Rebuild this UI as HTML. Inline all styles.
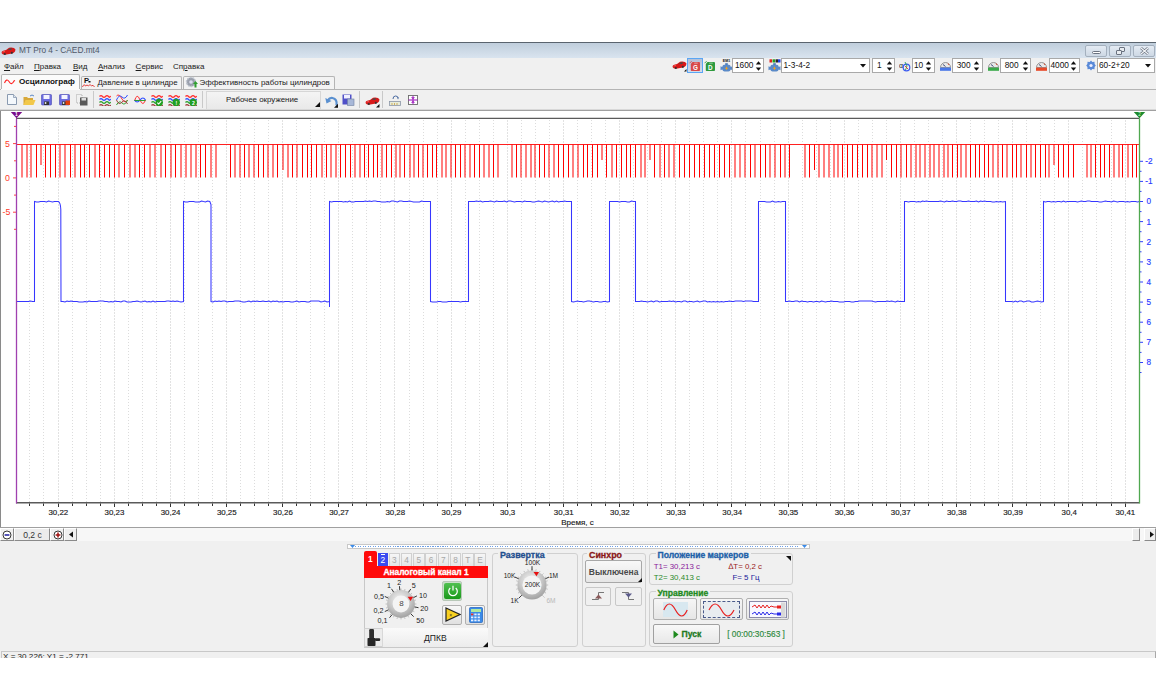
<!DOCTYPE html>
<html><head><meta charset="utf-8">
<style>
*{box-sizing:border-box;margin:0;padding:0}
html,body{width:1156px;height:700px;overflow:hidden;background:#fff;font-family:"Liberation Sans",sans-serif;font-size:8px;color:#1a1a1a}
.a{position:absolute}
.t{position:absolute;white-space:nowrap;line-height:1}
#win{position:absolute;left:0;top:42px;width:1156px;height:616px;background:#f0f0f0;overflow:hidden}
#title{position:absolute;left:0;top:0;width:1156px;height:16px;background:linear-gradient(#c0cedc,#d9e4ef);border-top:1px solid #5a646e}
.wb{position:absolute;top:1.5px;height:12px;width:22px;border:1px solid #a4b0be;border-radius:2px;background:linear-gradient(#e4ebf3,#cdd8e4)}
.menu{position:absolute;top:20.6px;font-size:8px;color:#1a1a1a}
.menu u{text-decoration:underline}
.tab{position:absolute;top:34px;height:14px;border:1px solid #b4b4b4;border-bottom:none;background:#f3f3f3;border-radius:2px 2px 0 0}
.tabA{top:32px;height:16px;background:#fbfbfb}
.tb{position:absolute}
.sep{position:absolute;top:49px;width:1px;height:17px;background:#c8c8c8;border-right:1px solid #fff}
.spin{position:absolute;top:16px;height:15px;background:#fff;border:1px solid #b8b8b8;font-size:7.8px}
.gb{position:absolute;border:1px solid #cfcfcf;border-radius:3px}
.gbt{position:absolute;font-weight:bold;background:#f0f0f0;padding:0 2px;line-height:1}
.btn{position:absolute;border:1px solid #adadad;border-radius:2px;background:linear-gradient(#f6f6f6,#e4e4e4)}
</style></head><body>
<div id="win">
  <div id="title">
    <svg class="a" style="left:1px;top:3px" width="15" height="10" viewBox="0 0 15 10"><path d="M0.5,7 L1,5.2 Q3,4.2 5,4 L8,1.8 Q10.5,1.2 13,2 L14.5,3.5 L14,5.5 Q13,7 11,7.5 L4,8.8 Q1.5,9 0.5,7Z" fill="#d81818"/><path d="M6.5,3.8 L9,2.2 L11.5,2.5 L10,4Z" fill="#4a4a4a"/><path d="M1.5,6 L4,5.5" stroke="#ff8080" stroke-width="0.6"/><circle cx="3.8" cy="8" r="1.1" fill="#333"/><circle cx="10.8" cy="6.8" r="1.1" fill="#333"/></svg>
    <div class="t" style="left:19px;top:3px;font-size:8.3px;color:#4f5868">MT Pro 4 - CAED.mt4</div>
    <div class="wb" style="left:1085px"><div class="a" style="left:6px;top:5.5px;width:9px;height:3px;border:1px solid #6a7280;border-radius:1.5px;background:#fff"></div></div>
    <div class="wb" style="left:1109px"><div class="a" style="left:9px;top:1.5px;width:6px;height:5px;border:1px solid #6a7280;border-radius:1px;background:#e8ecf0"></div><div class="a" style="left:6px;top:4.5px;width:6px;height:5px;border:1px solid #6a7280;border-radius:1px;background:#e8ecf0"></div></div>
    <div class="wb" style="left:1133px"><svg class="a" style="left:6px;top:1.5px" width="9" height="8" viewBox="0 0 9 8"><path d="M1,1 L8,7 M8,1 L1,7" stroke="#6a7280" stroke-width="2.6"/><path d="M1,1 L8,7 M8,1 L1,7" stroke="#f4f6f8" stroke-width="1.2"/></svg></div>
  </div>
  <!-- menu row -->
  <div class="menu t" style="left:4px"><u>Ф</u>айл</div>
  <div class="menu t" style="left:34px"><u>П</u>равка</div>
  <div class="menu t" style="left:73px"><u>В</u>ид</div>
  <div class="menu t" style="left:98px"><u>А</u>нализ</div>
  <div class="menu t" style="left:135.6px"><u>С</u>ервис</div>
  <div class="menu t" style="left:173px">Сп<u>р</u>авка</div>
  <svg class="a" style="left:672px;top:18px" width="15" height="12" viewBox="0 0 15 12"><path d="M0.5,7 L1,5.2 Q3,4.2 5,4 L8,1.8 Q10.5,1.2 13,2 L14.5,3.5 L14,5.5 Q13,7 11,7.5 L4,8.8 Q1.5,9 0.5,7Z" fill="#d81818"/><path d="M6.5,3.8 L9,2.2 L11.5,2.5 L10,4Z" fill="#4a4a4a"/><path d="M1.5,6 L4,5.5" stroke="#ff8080" stroke-width="0.6"/><circle cx="3.8" cy="8" r="1.1" fill="#333"/><circle cx="10.8" cy="6.8" r="1.1" fill="#333"/><path d="M12,11.5 L14.5,9 L14.5,11.5Z" fill="#111"/></svg>
<div class="a" style="left:687.4px;top:16px;width:15.6px;height:14.7px;background:linear-gradient(#b4c0d8,#d4dcea);border:1px solid #5aa6f4"></div>
<svg class="a" style="left:689.3px;top:18px" width="12" height="12" viewBox="0 0 12 12"><path d="M3.5,2 L10,2 Q11,2 11,3 L11,10.2 Q11,11 10,11 L2.6,11 Q1.8,11 1.8,10.2 L1.8,4 Z" fill="#d84848"/><path d="M0.6,3.2 L2.6,1.2" stroke="#d84848" stroke-width="0.9"/><rect x="5.2" y="2.6" width="3.5" height="1.1" fill="#fff" opacity="0.45"/><text x="6.4" y="9.8" font-family="Liberation Sans" font-size="6.3" font-weight="bold" fill="#fff" text-anchor="middle">G</text></svg>
<svg class="a" style="left:704.3px;top:18px" width="12" height="12" viewBox="0 0 12 12"><path d="M3.5,2 L10,2 Q11,2 11,3 L11,10.2 Q11,11 10,11 L2.6,11 Q1.8,11 1.8,10.2 L1.8,4 Z" fill="#2e9a3e"/><path d="M0.6,3.2 L2.6,1.2" stroke="#2e9a3e" stroke-width="0.9"/><rect x="5.2" y="2.6" width="3.5" height="1.1" fill="#fff" opacity="0.45"/><text x="6.4" y="9.8" font-family="Liberation Sans" font-size="6.3" font-weight="bold" fill="#fff" text-anchor="middle">D</text></svg>
<svg class="a" style="left:720px;top:17px" width="13" height="13" viewBox="0 0 13 13"><text x="6.5" y="3.3" font-family="Liberation Sans" font-size="3.6" font-weight="bold" fill="#111" text-anchor="middle">EM1</text><rect x="5.2" y="4.2" width="2.6" height="2" fill="#4a7ab8"/><path d="M2.5,7 Q3,5.8 4.5,5.8 L8.5,5.8 Q10,5.8 10.5,7 L10.8,8 L12.5,7.2 L12.5,11.3 L10.8,10.5 Q10,12.5 8.5,12.5 L4.5,12.5 Q3,12.5 2.2,10.5 L0.5,11.3 L0.5,7.2 L2.2,8Z" fill="#5a8ac8"/><path d="M6.5,7.3 L7.2,8.8 L8.4,9.3 L7.2,9.8 L6.5,11.3 L5.8,9.8 L4.6,9.3 L5.8,8.8Z" fill="#f0a020"/></svg>
<div class="a" style="left:732.3px;top:16.1px;width:31.7px;height:14.6px;background:#fff;border:1px solid #a9a9a9;"></div>
<div class="t" style="left:735.0px;top:19.2px;font-size:8.3px;color:#111">1600</div>
<svg class="a" style="left:754.5px;top:17.5px" width="7" height="12" viewBox="0 0 7 12"><path d="M0.8,4.4 L3.5,1.2 L6.2,4.4Z M0.8,7.6 L3.5,10.8 L6.2,7.6Z" fill="#111"/></svg>
<svg class="a" style="left:768px;top:17px" width="13" height="13" viewBox="0 0 13 13"><rect x="1.5" y="0.3" width="2.5" height="3.2" fill="#e02020"/><rect x="4.5" y="0.3" width="2.5" height="3.2" fill="#20a020"/><rect x="7.5" y="0.3" width="2.5" height="3.2" fill="#222"/><rect x="10" y="0.3" width="2.5" height="3.2" fill="#2040e0"/><rect x="5.2" y="4.2" width="2.6" height="2" fill="#4a7ab8"/><path d="M2.5,7 Q3,5.8 4.5,5.8 L8.5,5.8 Q10,5.8 10.5,7 L10.8,8 L12.5,7.2 L12.5,11.3 L10.8,10.5 Q10,12.5 8.5,12.5 L4.5,12.5 Q3,12.5 2.2,10.5 L0.5,11.3 L0.5,7.2 L2.2,8Z" fill="#5a8ac8"/><path d="M6.5,7.3 L7.2,8.8 L8.4,9.3 L7.2,9.8 L6.5,11.3 L5.8,9.8 L4.6,9.3 L5.8,8.8Z" fill="#f0a020"/></svg>
<div class="a" style="left:781.0px;top:16.1px;width:89.3px;height:14.6px;background:#fff;border:1px solid #a9a9a9;"></div>
<div class="t" style="left:783.4px;top:19.2px;font-size:8.3px;color:#111">1-3-4-2</div>
<svg class="a" style="left:860.0px;top:22px" width="6" height="4" viewBox="0 0 6 4"><path d="M0,0 L6,0 L3,3.5Z" fill="#111"/></svg>
<div class="a" style="left:871.9px;top:16.1px;width:22.8px;height:14.6px;background:#fff;border:1px solid #a9a9a9;"></div>
<div class="t" style="right:274.5px;top:19.2px;font-size:8.3px;color:#111">1</div>
<svg class="a" style="left:885.5px;top:17.5px" width="7" height="12" viewBox="0 0 7 12"><path d="M0.8,4.4 L3.5,1.2 L6.2,4.4Z M0.8,7.6 L3.5,10.8 L6.2,7.6Z" fill="#111"/></svg>
<svg class="a" style="left:898.5px;top:17.5px" width="12" height="12" viewBox="0 0 12 12"><text x="0" y="8" font-family="Liberation Sans" font-size="7" fill="#222">α</text><circle cx="7.5" cy="7.5" r="3.3" fill="none" stroke="#3a5af0" stroke-width="1.2"/><path d="M6,2 L8,6 L6.5,10" fill="none" stroke="#20a050" stroke-width="0.9"/><path d="M6,6 L9,9" stroke="#e03030" stroke-width="0.9"/></svg>
<div class="a" style="left:911.8px;top:16.1px;width:22.9px;height:14.6px;background:#fff;border:1px solid #a9a9a9;"></div>
<div class="t" style="left:914.0px;top:19.2px;font-size:8.3px;color:#111">10</div>
<svg class="a" style="left:925.0px;top:17.5px" width="7" height="12" viewBox="0 0 7 12"><path d="M0.8,4.4 L3.5,1.2 L6.2,4.4Z M0.8,7.6 L3.5,10.8 L6.2,7.6Z" fill="#111"/></svg>
<svg class="a" style="left:939.5px;top:18px" width="11" height="11" viewBox="0 0 11 11"><path d="M0.5,7.5 A5,5 0 0 1 10.5,7.5Z" fill="#e8e8e8" stroke="#8a8a8a" stroke-width="0.9"/><path d="M3,4.5 L5.5,6.5" stroke="#2a3a6a" stroke-width="0.9"/><path d="M8,3.5 L9,5" stroke="#e05030" stroke-width="1"/><rect x="0" y="7.6" width="11" height="3.2" fill="#4a78e8"/></svg>
<div class="a" style="left:951.5px;top:16.1px;width:31.2px;height:14.6px;background:#fff;border:1px solid #a9a9a9;"></div>
<div class="t" style="right:185.5px;top:19.2px;font-size:8.3px;color:#111">300</div>
<svg class="a" style="left:973.0px;top:17.5px" width="7" height="12" viewBox="0 0 7 12"><path d="M0.8,4.4 L3.5,1.2 L6.2,4.4Z M0.8,7.6 L3.5,10.8 L6.2,7.6Z" fill="#111"/></svg>
<svg class="a" style="left:987.7px;top:18px" width="11" height="11" viewBox="0 0 11 11"><path d="M0.5,7.5 A5,5 0 0 1 10.5,7.5Z" fill="#e8e8e8" stroke="#8a8a8a" stroke-width="0.9"/><path d="M3,4.5 L5.5,6.5" stroke="#2a3a6a" stroke-width="0.9"/><path d="M8,3.5 L9,5" stroke="#e05030" stroke-width="1"/><rect x="0" y="7.6" width="11" height="3.2" fill="#3aaa4a"/></svg>
<div class="a" style="left:1000.2px;top:16.1px;width:31.1px;height:14.6px;background:#fff;border:1px solid #a9a9a9;"></div>
<div class="t" style="right:137.5px;top:19.2px;font-size:8.3px;color:#111">800</div>
<svg class="a" style="left:1021.5px;top:17.5px" width="7" height="12" viewBox="0 0 7 12"><path d="M0.8,4.4 L3.5,1.2 L6.2,4.4Z M0.8,7.6 L3.5,10.8 L6.2,7.6Z" fill="#111"/></svg>
<svg class="a" style="left:1036.3px;top:18px" width="11" height="11" viewBox="0 0 11 11"><path d="M0.5,7.5 A5,5 0 0 1 10.5,7.5Z" fill="#e8e8e8" stroke="#8a8a8a" stroke-width="0.9"/><path d="M3,4.5 L5.5,6.5" stroke="#2a3a6a" stroke-width="0.9"/><path d="M8,3.5 L9,5" stroke="#e05030" stroke-width="1"/><rect x="0" y="7.6" width="11" height="3.2" fill="#e84a2a"/></svg>
<div class="a" style="left:1048.5px;top:16.1px;width:31.1px;height:14.6px;background:#fff;border:1px solid #a9a9a9;"></div>
<div class="t" style="left:1050.5px;top:19.2px;font-size:8.3px;color:#111">4000</div>
<svg class="a" style="left:1070.0px;top:17.5px" width="7" height="12" viewBox="0 0 7 12"><path d="M0.8,4.4 L3.5,1.2 L6.2,4.4Z M0.8,7.6 L3.5,10.8 L6.2,7.6Z" fill="#111"/></svg>
<svg class="a" style="left:1085.5px;top:18px" width="10" height="11" viewBox="0 0 10 11"><path d="M5,0.5 L6.3,2 L8.5,1.8 L8.6,4 L9.8,5.5 L8.6,7 L8.5,9.2 L6.3,9 L5,10.5 L3.7,9 L1.5,9.2 L1.4,7 L0.2,5.5 L1.4,4 L1.5,1.8 L3.7,2Z" fill="#5a8ad8"/><circle cx="5" cy="5.5" r="1.6" fill="#eef"/></svg>
<div class="a" style="left:1097.0px;top:16.1px;width:57.5px;height:14.6px;background:#fff;border:1px solid #a9a9a9;"></div>
<div class="t" style="left:1099.0px;top:19.2px;font-size:8.3px;color:#111">60-2+20</div>
<svg class="a" style="left:1144.5px;top:22px" width="6" height="4" viewBox="0 0 6 4"><path d="M0,0 L6,0 L3,3.5Z" fill="#111"/></svg>
  <!-- tabs -->
  <div class="tab tabA" style="left:1px;width:79px"></div>
  <div class="tab" style="left:80.5px;width:101px"></div>
  <div class="tab" style="left:183px;width:152px"></div>
  <div class="a" style="left:0;top:47px;width:1156px;height:1px;background:#b4b4b4"></div>
  <div class="a" style="left:1px;top:47px;width:79px;height:1px;background:#fbfbfb"></div>
  <svg class="a" style="left:4px;top:36px" width="12" height="8" viewBox="0 0 12 8"><path d="M0.5,5 Q2.5,0 5,3.5 Q7.5,8 10,3 L11,2.5" fill="none" stroke="#ff2020" stroke-width="1.1"/></svg>
  <div class="t" style="left:19px;top:36px;font-weight:bold;font-size:8.1px;color:#111">Осциллограф</div>
  <div class="t" style="left:97.5px;top:37px;font-size:7.9px">Давление в цилиндре</div>
  <div class="t" style="left:199.5px;top:37px;font-size:7.9px">Эффективность работы цилиндров</div>
  <svg class="a" style="left:82px;top:34px" width="13" height="12" viewBox="0 0 13 12"><text x="2" y="7" font-family="Liberation Sans" font-size="7.5" font-weight="bold" fill="#111">P</text><rect x="6.5" y="5" width="2" height="1.5" fill="#111"/><path d="M0.5,11 Q2,7 3.5,10 Q5,8 6.5,10 Q8,7 9.5,10 Q11,8 12.5,11" fill="none" stroke="#e03030" stroke-width="0.9"/></svg>
<svg class="a" style="left:185px;top:34px" width="13" height="12" viewBox="0 0 13 12"><circle cx="6" cy="6" r="4.5" fill="#9aa0ac"/><circle cx="6" cy="6" r="4.5" fill="none" stroke="#c0c6d0" stroke-width="1.5" stroke-dasharray="1.5 1.3"/><circle cx="6" cy="6" r="1.8" fill="#dde"/><path d="M9.5,11.5 L9.5,8 L8,8 L10.5,5 L13,8 L11.5,8 L11.5,11.5Z" fill="#30a030"/></svg>
<svg class="a" style="left:6.5px;top:52px" width="11" height="12" viewBox="0 0 11 12"><path d="M0.5,0.5 L6.5,0.5 L9.5,3.5 L9.5,10.5 L0.5,10.5Z" fill="#f4f8fc" stroke="#8a9ab0" stroke-width="1"/><path d="M6.5,0.5 L6.5,3.5 L9.5,3.5" fill="#dde6f0" stroke="#8a9ab0" stroke-width="0.8"/></svg>
<svg class="a" style="left:22.5px;top:51.5px" width="13" height="12" viewBox="0 0 13 12"><path d="M0.5,3 L4,3 L5,4 L10,4 L10,11 L0.5,11Z" fill="#d8a838"/><path d="M2.5,6 L12.5,6 L10.5,11 L0.5,11Z" fill="#f2c84a"/><path d="M7,2 Q9,0 11,2" fill="none" stroke="#4a7ac0" stroke-width="0.9"/></svg>
<svg class="a" style="left:41px;top:52px" width="11" height="12" viewBox="0 0 11 12"><rect x="0.5" y="0.5" width="10" height="10.5" rx="0.8" fill="#6a6ae0"/><rect x="0.5" y="0.5" width="10" height="10.5" rx="0.8" fill="none" stroke="#4848b0" stroke-width="0.6"/><rect x="2.5" y="1" width="6" height="4" fill="#f4f4ff"/><rect x="3" y="7.5" width="5" height="3.5" fill="#333"/><rect x="3.8" y="8" width="1.5" height="2" fill="#ddd"/></svg>
<svg class="a" style="left:58.5px;top:52px" width="11" height="12" viewBox="0 0 11 12"><rect x="0.5" y="0.5" width="10" height="10.5" rx="0.8" fill="#6a6ae0"/><rect x="0.5" y="0.5" width="10" height="10.5" rx="0.8" fill="none" stroke="#4848b0" stroke-width="0.6"/><rect x="2.5" y="1" width="6" height="4" fill="#f4f4ff"/><rect x="3" y="7.5" width="5" height="3.5" fill="#333"/><rect x="3.8" y="8" width="1.5" height="2" fill="#ddd"/><rect x="6.5" y="6.5" width="4.5" height="4.5" fill="#e04010"/></svg>
<svg class="a" style="left:75.5px;top:51.5px" width="12" height="12" viewBox="0 0 12 12"><path d="M0.5,0.5 L6,0.5 L6,9 L0.5,9Z" fill="none" stroke="#9a9a9a" stroke-width="0.8" stroke-dasharray="1 1"/><rect x="4" y="3.5" width="7.5" height="8" fill="#5a5a5a"/><rect x="5.5" y="4" width="4.5" height="2.5" fill="#ddd"/></svg>
<div class="a" style="left:92.5px;top:49px;width:1px;height:17px;background:#c9c9c9"></div>
<svg class="a" style="left:98.8px;top:51.7px" width="12" height="12" viewBox="0 0 12 12"><path d="M0.5,2.5 Q2,0.8 3.5,2.5 T6.5,2.5 T9.5,2.5 T11.5,2.0" fill="none" stroke="#ff3030" stroke-width="1.3"/><path d="M0.5,5.5 Q2,3.8 3.5,5.5 T6.5,5.5 T9.5,5.5 T11.5,5.0" fill="none" stroke="#3050ff" stroke-width="1.3"/><path d="M0.5,8.5 Q2,6.8 3.5,8.5 T6.5,8.5 T9.5,8.5 T11.5,8.0" fill="none" stroke="#30a030" stroke-width="1.3"/><path d="M0.5,11.5 Q2,9.8 3.5,11.5 T6.5,11.5 T9.5,11.5 T11.5,11.0" fill="none" stroke="#a04040" stroke-width="1.3"/></svg>
<svg class="a" style="left:115.5px;top:51.7px" width="12" height="12" viewBox="0 0 12 12"><path d="M0.5,2 Q3,-1 6,5 Q9,10 11.5,6" fill="none" stroke="#ff3030" stroke-width="1"/><path d="M0.5,6 Q3,0 6,3 Q9,6 11.5,1" fill="none" stroke="#3050ff" stroke-width="1"/><path d="M0.5,11 Q3,6 6,9 Q9,12 11.5,6" fill="none" stroke="#30a030" stroke-width="1"/><path d="M0.5,6 Q3,12 6,8 Q9,5 11.5,10" fill="none" stroke="#a04040" stroke-width="1"/></svg>
<svg class="a" style="left:133.5px;top:51.7px" width="12" height="12" viewBox="0 0 12 12"><path d="M0.5,7 Q3,-2 6,6 Q9,13 11.5,6" fill="none" stroke="#ff3030" stroke-width="1"/><path d="M0.5,6 Q3,10 6,6 Q9,2 11.5,6" fill="none" stroke="#3050ff" stroke-width="1.2"/><path d="M0.5,6.5 L11.5,6.5" stroke="#30a030" stroke-width="1"/></svg>
<svg class="a" style="left:150.7px;top:51.7px" width="12" height="12" viewBox="0 0 12 12"><path d="M0.5,2.5 Q2,0.8 3.5,2.5 T6.5,2.5 T9.5,2.5 T11.5,2.0" fill="none" stroke="#ff3030" stroke-width="1.3"/><path d="M0.5,5.5 Q2,3.8 3.5,5.5 T6.5,5.5 T9.5,5.5 T11.5,5.0" fill="none" stroke="#3050ff" stroke-width="1.3"/><path d="M0.5,8.5 Q2,6.8 3.5,8.5 T6.5,8.5 T9.5,8.5 T11.5,8.0" fill="none" stroke="#30a030" stroke-width="1.3"/><path d="M0.5,11.5 Q2,9.8 3.5,11.5 T6.5,11.5 T9.5,11.5 T11.5,11.0" fill="none" stroke="#a04040" stroke-width="1.3"/><circle cx="8.2" cy="8.5" r="3.7" fill="#22a022"/><path d="M6.3,8.6 L7.7,10 L10.2,7.2" fill="none" stroke="#fff" stroke-width="1.1"/></svg>
<svg class="a" style="left:167.8px;top:51.7px" width="12" height="12" viewBox="0 0 12 12"><path d="M0.5,2.5 Q2,0.8 3.5,2.5 T6.5,2.5 T9.5,2.5 T11.5,2.0" fill="none" stroke="#ff3030" stroke-width="1.3"/><path d="M0.5,5.5 Q2,3.8 3.5,5.5 T6.5,5.5 T9.5,5.5 T11.5,5.0" fill="none" stroke="#3050ff" stroke-width="1.3"/><path d="M0.5,8.5 Q2,6.8 3.5,8.5 T6.5,8.5 T9.5,8.5 T11.5,8.0" fill="none" stroke="#30a030" stroke-width="1.3"/><path d="M0.5,11.5 Q2,9.8 3.5,11.5 T6.5,11.5 T9.5,11.5 T11.5,11.0" fill="none" stroke="#a04040" stroke-width="1.3"/><circle cx="8.2" cy="8.5" r="3.7" fill="#22a022"/><text x="8.3" y="10.8" font-family="Liberation Sans" font-size="5" font-weight="bold" fill="#fff" text-anchor="middle">!</text></svg>
<svg class="a" style="left:185.4px;top:51.7px" width="12" height="12" viewBox="0 0 12 12"><path d="M0.5,2.5 Q2,0.8 3.5,2.5 T6.5,2.5 T9.5,2.5 T11.5,2.0" fill="none" stroke="#ff3030" stroke-width="1.3"/><path d="M0.5,5.5 Q2,3.8 3.5,5.5 T6.5,5.5 T9.5,5.5 T11.5,5.0" fill="none" stroke="#3050ff" stroke-width="1.3"/><path d="M0.5,8.5 Q2,6.8 3.5,8.5 T6.5,8.5 T9.5,8.5 T11.5,8.0" fill="none" stroke="#30a030" stroke-width="1.3"/><path d="M0.5,11.5 Q2,9.8 3.5,11.5 T6.5,11.5 T9.5,11.5 T11.5,11.0" fill="none" stroke="#a04040" stroke-width="1.3"/><circle cx="8.2" cy="8.5" r="3.7" fill="#22a022"/><text x="8.3" y="10.8" font-family="Liberation Sans" font-size="5" font-weight="bold" fill="#fff" text-anchor="middle">2</text></svg>
<div class="a" style="left:202px;top:49px;width:1px;height:17px;background:#c9c9c9"></div>
<div class="a" style="left:205.5px;top:48.5px;width:115px;height:18px;background:linear-gradient(#f4f4f4,#e9e9e9);border:1px solid #d6d6d6;border-bottom:none"></div>
<div class="t" style="left:226px;top:53.5px;font-size:7.9px;color:#222">Рабочее окружение</div>
<svg class="a" style="left:315px;top:60px" width="5" height="5" viewBox="0 0 5 5"><path d="M0,5 L5,0 L5,5Z" fill="#111"/></svg>
<svg class="a" style="left:324.5px;top:53px" width="14" height="13" viewBox="0 0 14 13"><path d="M11.5,10.5 Q12.5,4 7.5,3 Q4.5,2.6 3,5" fill="none" stroke="#5a90d0" stroke-width="2.2"/><path d="M0.3,3 L1.5,8.5 L6.5,6Z" fill="#5a90d0"/><path d="M9,12.8 L13,8.8 L13,12.8Z" fill="#111"/></svg>
<svg class="a" style="left:342.4px;top:51.900000000000006px" width="13" height="12" viewBox="0 0 13 12"><rect x="0.5" y="0.5" width="9" height="10" fill="#5050c8"/><rect x="2" y="1" width="6" height="3.5" fill="#f0f0ff"/><rect x="5.5" y="5" width="6.5" height="6.5" fill="#a8b8d8" stroke="#7080a0" stroke-width="0.6"/></svg>
<div class="a" style="left:359px;top:49px;width:1px;height:17px;background:#c9c9c9"></div>
<svg class="a" style="left:365px;top:53.5px" width="15" height="12" viewBox="0 0 15 12"><path d="M0.5,7 L1,5.2 Q3,4.2 5,4 L8,1.8 Q10.5,1.2 13,2 L14.5,3.5 L14,5.5 Q13,7 11,7.5 L4,8.8 Q1.5,9 0.5,7Z" fill="#d81818"/><path d="M6.5,3.8 L9,2.2 L11.5,2.5 L10,4Z" fill="#4a4a4a"/><path d="M1.5,6 L4,5.5" stroke="#ff8080" stroke-width="0.6"/><circle cx="3.8" cy="8" r="1.1" fill="#333"/><circle cx="10.8" cy="6.8" r="1.1" fill="#333"/><path d="M11,11.5 L14.5,8 L14.5,11.5Z" fill="#111"/></svg>
<div class="a" style="left:382px;top:49px;width:1px;height:17px;background:#c9c9c9"></div>
<svg class="a" style="left:389px;top:52.5px" width="12" height="11" viewBox="0 0 12 11"><path d="M4,4 Q4,1 6.5,1 Q9,1 9,3" fill="none" stroke="#4a6aa0" stroke-width="1"/><path d="M8,2.5 L10,2.5 L9,4.5Z" fill="#4a6aa0"/><rect x="0.5" y="6.5" width="11" height="4" fill="#e8ecd8" stroke="#8a96a8" stroke-width="0.8"/><path d="M3,8 V10 M5.5,8 V10 M8,8 V10" stroke="#c8a040" stroke-width="0.8"/></svg>
<svg class="a" style="left:407.5px;top:52.8px" width="10" height="10" viewBox="0 0 10 10"><rect x="0.5" y="0.5" width="9" height="9" fill="#fff" stroke="#6a6a6a" stroke-width="0.9"/><path d="M0.5,5 H9.5" stroke="#a020c0" stroke-width="1.1"/><path d="M5,0.8 V9.2" stroke="#a020c0" stroke-width="1"/><path d="M3,2.2 L5,4.2 L7,2.2Z M3,7.8 L5,5.8 L7,7.8Z" fill="#a020c0"/></svg>
<div class="a" style="left:0;top:66.5px;width:1156px;height:1px;background:#d8d8d8"></div>
</div>
<svg width="1156" height="418" viewBox="0 110 1156 418" style="position:absolute;left:0;top:110px">
<rect x="0" y="110" width="1156" height="418" fill="#fff"/>
<line x1="0.5" y1="110" x2="0.5" y2="528" stroke="#8a8a8a" stroke-width="1"/>
<line x1="0" y1="110.5" x2="1156" y2="110.5" stroke="#a0a0a0" stroke-width="1"/>
<line x1="0" y1="527.5" x2="1156" y2="527.5" stroke="#a0a0a0" stroke-width="1"/>
<line x1="29.50" y1="120" x2="29.50" y2="502" stroke="#dcdcdc" stroke-width="1" stroke-dasharray="1 2"/><line x1="43.50" y1="120" x2="43.50" y2="502" stroke="#dcdcdc" stroke-width="1" stroke-dasharray="1 2"/><line x1="58.50" y1="120" x2="58.50" y2="502" stroke="#e2e2e2" stroke-width="1" stroke-dasharray="2 1"/><line x1="72.50" y1="120" x2="72.50" y2="502" stroke="#dcdcdc" stroke-width="1" stroke-dasharray="1 2"/><line x1="86.50" y1="120" x2="86.50" y2="502" stroke="#dcdcdc" stroke-width="1" stroke-dasharray="1 2"/><line x1="100.50" y1="120" x2="100.50" y2="502" stroke="#dcdcdc" stroke-width="1" stroke-dasharray="1 2"/><line x1="114.50" y1="120" x2="114.50" y2="502" stroke="#e2e2e2" stroke-width="1" stroke-dasharray="2 1"/><line x1="128.50" y1="120" x2="128.50" y2="502" stroke="#dcdcdc" stroke-width="1" stroke-dasharray="1 2"/><line x1="142.50" y1="120" x2="142.50" y2="502" stroke="#dcdcdc" stroke-width="1" stroke-dasharray="1 2"/><line x1="156.50" y1="120" x2="156.50" y2="502" stroke="#dcdcdc" stroke-width="1" stroke-dasharray="1 2"/><line x1="170.50" y1="120" x2="170.50" y2="502" stroke="#e2e2e2" stroke-width="1" stroke-dasharray="2 1"/><line x1="184.50" y1="120" x2="184.50" y2="502" stroke="#dcdcdc" stroke-width="1" stroke-dasharray="1 2"/><line x1="198.50" y1="120" x2="198.50" y2="502" stroke="#dcdcdc" stroke-width="1" stroke-dasharray="1 2"/><line x1="212.50" y1="120" x2="212.50" y2="502" stroke="#dcdcdc" stroke-width="1" stroke-dasharray="1 2"/><line x1="226.50" y1="120" x2="226.50" y2="502" stroke="#e2e2e2" stroke-width="1" stroke-dasharray="2 1"/><line x1="240.50" y1="120" x2="240.50" y2="502" stroke="#dcdcdc" stroke-width="1" stroke-dasharray="1 2"/><line x1="254.50" y1="120" x2="254.50" y2="502" stroke="#dcdcdc" stroke-width="1" stroke-dasharray="1 2"/><line x1="268.50" y1="120" x2="268.50" y2="502" stroke="#dcdcdc" stroke-width="1" stroke-dasharray="1 2"/><line x1="282.50" y1="120" x2="282.50" y2="502" stroke="#e2e2e2" stroke-width="1" stroke-dasharray="2 1"/><line x1="296.50" y1="120" x2="296.50" y2="502" stroke="#dcdcdc" stroke-width="1" stroke-dasharray="1 2"/><line x1="310.50" y1="120" x2="310.50" y2="502" stroke="#dcdcdc" stroke-width="1" stroke-dasharray="1 2"/><line x1="324.50" y1="120" x2="324.50" y2="502" stroke="#dcdcdc" stroke-width="1" stroke-dasharray="1 2"/><line x1="338.50" y1="120" x2="338.50" y2="502" stroke="#e2e2e2" stroke-width="1" stroke-dasharray="2 1"/><line x1="352.50" y1="120" x2="352.50" y2="502" stroke="#dcdcdc" stroke-width="1" stroke-dasharray="1 2"/><line x1="366.50" y1="120" x2="366.50" y2="502" stroke="#dcdcdc" stroke-width="1" stroke-dasharray="1 2"/><line x1="380.50" y1="120" x2="380.50" y2="502" stroke="#dcdcdc" stroke-width="1" stroke-dasharray="1 2"/><line x1="394.50" y1="120" x2="394.50" y2="502" stroke="#e2e2e2" stroke-width="1" stroke-dasharray="2 1"/><line x1="409.50" y1="120" x2="409.50" y2="502" stroke="#dcdcdc" stroke-width="1" stroke-dasharray="1 2"/><line x1="423.50" y1="120" x2="423.50" y2="502" stroke="#dcdcdc" stroke-width="1" stroke-dasharray="1 2"/><line x1="437.50" y1="120" x2="437.50" y2="502" stroke="#dcdcdc" stroke-width="1" stroke-dasharray="1 2"/><line x1="451.50" y1="120" x2="451.50" y2="502" stroke="#e2e2e2" stroke-width="1" stroke-dasharray="2 1"/><line x1="465.50" y1="120" x2="465.50" y2="502" stroke="#dcdcdc" stroke-width="1" stroke-dasharray="1 2"/><line x1="479.50" y1="120" x2="479.50" y2="502" stroke="#dcdcdc" stroke-width="1" stroke-dasharray="1 2"/><line x1="493.50" y1="120" x2="493.50" y2="502" stroke="#dcdcdc" stroke-width="1" stroke-dasharray="1 2"/><line x1="507.50" y1="120" x2="507.50" y2="502" stroke="#e2e2e2" stroke-width="1" stroke-dasharray="2 1"/><line x1="521.50" y1="120" x2="521.50" y2="502" stroke="#dcdcdc" stroke-width="1" stroke-dasharray="1 2"/><line x1="535.50" y1="120" x2="535.50" y2="502" stroke="#dcdcdc" stroke-width="1" stroke-dasharray="1 2"/><line x1="549.50" y1="120" x2="549.50" y2="502" stroke="#dcdcdc" stroke-width="1" stroke-dasharray="1 2"/><line x1="563.50" y1="120" x2="563.50" y2="502" stroke="#e2e2e2" stroke-width="1" stroke-dasharray="2 1"/><line x1="577.50" y1="120" x2="577.50" y2="502" stroke="#dcdcdc" stroke-width="1" stroke-dasharray="1 2"/><line x1="591.50" y1="120" x2="591.50" y2="502" stroke="#dcdcdc" stroke-width="1" stroke-dasharray="1 2"/><line x1="605.50" y1="120" x2="605.50" y2="502" stroke="#dcdcdc" stroke-width="1" stroke-dasharray="1 2"/><line x1="619.50" y1="120" x2="619.50" y2="502" stroke="#e2e2e2" stroke-width="1" stroke-dasharray="2 1"/><line x1="633.50" y1="120" x2="633.50" y2="502" stroke="#dcdcdc" stroke-width="1" stroke-dasharray="1 2"/><line x1="647.50" y1="120" x2="647.50" y2="502" stroke="#dcdcdc" stroke-width="1" stroke-dasharray="1 2"/><line x1="661.50" y1="120" x2="661.50" y2="502" stroke="#dcdcdc" stroke-width="1" stroke-dasharray="1 2"/><line x1="675.50" y1="120" x2="675.50" y2="502" stroke="#e2e2e2" stroke-width="1" stroke-dasharray="2 1"/><line x1="689.50" y1="120" x2="689.50" y2="502" stroke="#dcdcdc" stroke-width="1" stroke-dasharray="1 2"/><line x1="703.50" y1="120" x2="703.50" y2="502" stroke="#dcdcdc" stroke-width="1" stroke-dasharray="1 2"/><line x1="717.50" y1="120" x2="717.50" y2="502" stroke="#dcdcdc" stroke-width="1" stroke-dasharray="1 2"/><line x1="731.50" y1="120" x2="731.50" y2="502" stroke="#e2e2e2" stroke-width="1" stroke-dasharray="2 1"/><line x1="745.50" y1="120" x2="745.50" y2="502" stroke="#dcdcdc" stroke-width="1" stroke-dasharray="1 2"/><line x1="760.50" y1="120" x2="760.50" y2="502" stroke="#dcdcdc" stroke-width="1" stroke-dasharray="1 2"/><line x1="774.50" y1="120" x2="774.50" y2="502" stroke="#dcdcdc" stroke-width="1" stroke-dasharray="1 2"/><line x1="788.50" y1="120" x2="788.50" y2="502" stroke="#e2e2e2" stroke-width="1" stroke-dasharray="2 1"/><line x1="802.50" y1="120" x2="802.50" y2="502" stroke="#dcdcdc" stroke-width="1" stroke-dasharray="1 2"/><line x1="816.50" y1="120" x2="816.50" y2="502" stroke="#dcdcdc" stroke-width="1" stroke-dasharray="1 2"/><line x1="830.50" y1="120" x2="830.50" y2="502" stroke="#dcdcdc" stroke-width="1" stroke-dasharray="1 2"/><line x1="844.50" y1="120" x2="844.50" y2="502" stroke="#e2e2e2" stroke-width="1" stroke-dasharray="2 1"/><line x1="858.50" y1="120" x2="858.50" y2="502" stroke="#dcdcdc" stroke-width="1" stroke-dasharray="1 2"/><line x1="872.50" y1="120" x2="872.50" y2="502" stroke="#dcdcdc" stroke-width="1" stroke-dasharray="1 2"/><line x1="886.50" y1="120" x2="886.50" y2="502" stroke="#dcdcdc" stroke-width="1" stroke-dasharray="1 2"/><line x1="900.50" y1="120" x2="900.50" y2="502" stroke="#e2e2e2" stroke-width="1" stroke-dasharray="2 1"/><line x1="914.50" y1="120" x2="914.50" y2="502" stroke="#dcdcdc" stroke-width="1" stroke-dasharray="1 2"/><line x1="928.50" y1="120" x2="928.50" y2="502" stroke="#dcdcdc" stroke-width="1" stroke-dasharray="1 2"/><line x1="942.50" y1="120" x2="942.50" y2="502" stroke="#dcdcdc" stroke-width="1" stroke-dasharray="1 2"/><line x1="956.50" y1="120" x2="956.50" y2="502" stroke="#e2e2e2" stroke-width="1" stroke-dasharray="2 1"/><line x1="970.50" y1="120" x2="970.50" y2="502" stroke="#dcdcdc" stroke-width="1" stroke-dasharray="1 2"/><line x1="984.50" y1="120" x2="984.50" y2="502" stroke="#dcdcdc" stroke-width="1" stroke-dasharray="1 2"/><line x1="998.50" y1="120" x2="998.50" y2="502" stroke="#dcdcdc" stroke-width="1" stroke-dasharray="1 2"/><line x1="1012.50" y1="120" x2="1012.50" y2="502" stroke="#e2e2e2" stroke-width="1" stroke-dasharray="2 1"/><line x1="1026.50" y1="120" x2="1026.50" y2="502" stroke="#dcdcdc" stroke-width="1" stroke-dasharray="1 2"/><line x1="1040.50" y1="120" x2="1040.50" y2="502" stroke="#dcdcdc" stroke-width="1" stroke-dasharray="1 2"/><line x1="1054.50" y1="120" x2="1054.50" y2="502" stroke="#dcdcdc" stroke-width="1" stroke-dasharray="1 2"/><line x1="1068.50" y1="120" x2="1068.50" y2="502" stroke="#e2e2e2" stroke-width="1" stroke-dasharray="2 1"/><line x1="1082.50" y1="120" x2="1082.50" y2="502" stroke="#dcdcdc" stroke-width="1" stroke-dasharray="1 2"/><line x1="1096.50" y1="120" x2="1096.50" y2="502" stroke="#dcdcdc" stroke-width="1" stroke-dasharray="1 2"/><line x1="1111.50" y1="120" x2="1111.50" y2="502" stroke="#dcdcdc" stroke-width="1" stroke-dasharray="1 2"/><line x1="1125.50" y1="120" x2="1125.50" y2="502" stroke="#e2e2e2" stroke-width="1" stroke-dasharray="2 1"/>
<line x1="16" y1="118.3" x2="1139.5" y2="118.3" stroke="#5a5a5a" stroke-width="1.2"/>
<line x1="16" y1="502.8" x2="1139.5" y2="502.8" stroke="#5a5a5a" stroke-width="1.4"/>
<line x1="29.50" y1="503.5" x2="29.50" y2="506.0" stroke="#333" stroke-width="1"/><line x1="43.50" y1="503.5" x2="43.50" y2="506.0" stroke="#333" stroke-width="1"/><line x1="58.50" y1="503.5" x2="58.50" y2="507.0" stroke="#333" stroke-width="1"/><line x1="72.50" y1="503.5" x2="72.50" y2="506.0" stroke="#333" stroke-width="1"/><line x1="86.50" y1="503.5" x2="86.50" y2="506.0" stroke="#333" stroke-width="1"/><line x1="100.50" y1="503.5" x2="100.50" y2="506.0" stroke="#333" stroke-width="1"/><line x1="114.50" y1="503.5" x2="114.50" y2="507.0" stroke="#333" stroke-width="1"/><line x1="128.50" y1="503.5" x2="128.50" y2="506.0" stroke="#333" stroke-width="1"/><line x1="142.50" y1="503.5" x2="142.50" y2="506.0" stroke="#333" stroke-width="1"/><line x1="156.50" y1="503.5" x2="156.50" y2="506.0" stroke="#333" stroke-width="1"/><line x1="170.50" y1="503.5" x2="170.50" y2="507.0" stroke="#333" stroke-width="1"/><line x1="184.50" y1="503.5" x2="184.50" y2="506.0" stroke="#333" stroke-width="1"/><line x1="198.50" y1="503.5" x2="198.50" y2="506.0" stroke="#333" stroke-width="1"/><line x1="212.50" y1="503.5" x2="212.50" y2="506.0" stroke="#333" stroke-width="1"/><line x1="226.50" y1="503.5" x2="226.50" y2="507.0" stroke="#333" stroke-width="1"/><line x1="240.50" y1="503.5" x2="240.50" y2="506.0" stroke="#333" stroke-width="1"/><line x1="254.50" y1="503.5" x2="254.50" y2="506.0" stroke="#333" stroke-width="1"/><line x1="268.50" y1="503.5" x2="268.50" y2="506.0" stroke="#333" stroke-width="1"/><line x1="282.50" y1="503.5" x2="282.50" y2="507.0" stroke="#333" stroke-width="1"/><line x1="296.50" y1="503.5" x2="296.50" y2="506.0" stroke="#333" stroke-width="1"/><line x1="310.50" y1="503.5" x2="310.50" y2="506.0" stroke="#333" stroke-width="1"/><line x1="324.50" y1="503.5" x2="324.50" y2="506.0" stroke="#333" stroke-width="1"/><line x1="338.50" y1="503.5" x2="338.50" y2="507.0" stroke="#333" stroke-width="1"/><line x1="352.50" y1="503.5" x2="352.50" y2="506.0" stroke="#333" stroke-width="1"/><line x1="366.50" y1="503.5" x2="366.50" y2="506.0" stroke="#333" stroke-width="1"/><line x1="380.50" y1="503.5" x2="380.50" y2="506.0" stroke="#333" stroke-width="1"/><line x1="394.50" y1="503.5" x2="394.50" y2="507.0" stroke="#333" stroke-width="1"/><line x1="409.50" y1="503.5" x2="409.50" y2="506.0" stroke="#333" stroke-width="1"/><line x1="423.50" y1="503.5" x2="423.50" y2="506.0" stroke="#333" stroke-width="1"/><line x1="437.50" y1="503.5" x2="437.50" y2="506.0" stroke="#333" stroke-width="1"/><line x1="451.50" y1="503.5" x2="451.50" y2="507.0" stroke="#333" stroke-width="1"/><line x1="465.50" y1="503.5" x2="465.50" y2="506.0" stroke="#333" stroke-width="1"/><line x1="479.50" y1="503.5" x2="479.50" y2="506.0" stroke="#333" stroke-width="1"/><line x1="493.50" y1="503.5" x2="493.50" y2="506.0" stroke="#333" stroke-width="1"/><line x1="507.50" y1="503.5" x2="507.50" y2="507.0" stroke="#333" stroke-width="1"/><line x1="521.50" y1="503.5" x2="521.50" y2="506.0" stroke="#333" stroke-width="1"/><line x1="535.50" y1="503.5" x2="535.50" y2="506.0" stroke="#333" stroke-width="1"/><line x1="549.50" y1="503.5" x2="549.50" y2="506.0" stroke="#333" stroke-width="1"/><line x1="563.50" y1="503.5" x2="563.50" y2="507.0" stroke="#333" stroke-width="1"/><line x1="577.50" y1="503.5" x2="577.50" y2="506.0" stroke="#333" stroke-width="1"/><line x1="591.50" y1="503.5" x2="591.50" y2="506.0" stroke="#333" stroke-width="1"/><line x1="605.50" y1="503.5" x2="605.50" y2="506.0" stroke="#333" stroke-width="1"/><line x1="619.50" y1="503.5" x2="619.50" y2="507.0" stroke="#333" stroke-width="1"/><line x1="633.50" y1="503.5" x2="633.50" y2="506.0" stroke="#333" stroke-width="1"/><line x1="647.50" y1="503.5" x2="647.50" y2="506.0" stroke="#333" stroke-width="1"/><line x1="661.50" y1="503.5" x2="661.50" y2="506.0" stroke="#333" stroke-width="1"/><line x1="675.50" y1="503.5" x2="675.50" y2="507.0" stroke="#333" stroke-width="1"/><line x1="689.50" y1="503.5" x2="689.50" y2="506.0" stroke="#333" stroke-width="1"/><line x1="703.50" y1="503.5" x2="703.50" y2="506.0" stroke="#333" stroke-width="1"/><line x1="717.50" y1="503.5" x2="717.50" y2="506.0" stroke="#333" stroke-width="1"/><line x1="731.50" y1="503.5" x2="731.50" y2="507.0" stroke="#333" stroke-width="1"/><line x1="745.50" y1="503.5" x2="745.50" y2="506.0" stroke="#333" stroke-width="1"/><line x1="760.50" y1="503.5" x2="760.50" y2="506.0" stroke="#333" stroke-width="1"/><line x1="774.50" y1="503.5" x2="774.50" y2="506.0" stroke="#333" stroke-width="1"/><line x1="788.50" y1="503.5" x2="788.50" y2="507.0" stroke="#333" stroke-width="1"/><line x1="802.50" y1="503.5" x2="802.50" y2="506.0" stroke="#333" stroke-width="1"/><line x1="816.50" y1="503.5" x2="816.50" y2="506.0" stroke="#333" stroke-width="1"/><line x1="830.50" y1="503.5" x2="830.50" y2="506.0" stroke="#333" stroke-width="1"/><line x1="844.50" y1="503.5" x2="844.50" y2="507.0" stroke="#333" stroke-width="1"/><line x1="858.50" y1="503.5" x2="858.50" y2="506.0" stroke="#333" stroke-width="1"/><line x1="872.50" y1="503.5" x2="872.50" y2="506.0" stroke="#333" stroke-width="1"/><line x1="886.50" y1="503.5" x2="886.50" y2="506.0" stroke="#333" stroke-width="1"/><line x1="900.50" y1="503.5" x2="900.50" y2="507.0" stroke="#333" stroke-width="1"/><line x1="914.50" y1="503.5" x2="914.50" y2="506.0" stroke="#333" stroke-width="1"/><line x1="928.50" y1="503.5" x2="928.50" y2="506.0" stroke="#333" stroke-width="1"/><line x1="942.50" y1="503.5" x2="942.50" y2="506.0" stroke="#333" stroke-width="1"/><line x1="956.50" y1="503.5" x2="956.50" y2="507.0" stroke="#333" stroke-width="1"/><line x1="970.50" y1="503.5" x2="970.50" y2="506.0" stroke="#333" stroke-width="1"/><line x1="984.50" y1="503.5" x2="984.50" y2="506.0" stroke="#333" stroke-width="1"/><line x1="998.50" y1="503.5" x2="998.50" y2="506.0" stroke="#333" stroke-width="1"/><line x1="1012.50" y1="503.5" x2="1012.50" y2="507.0" stroke="#333" stroke-width="1"/><line x1="1026.50" y1="503.5" x2="1026.50" y2="506.0" stroke="#333" stroke-width="1"/><line x1="1040.50" y1="503.5" x2="1040.50" y2="506.0" stroke="#333" stroke-width="1"/><line x1="1054.50" y1="503.5" x2="1054.50" y2="506.0" stroke="#333" stroke-width="1"/><line x1="1068.50" y1="503.5" x2="1068.50" y2="507.0" stroke="#333" stroke-width="1"/><line x1="1082.50" y1="503.5" x2="1082.50" y2="506.0" stroke="#333" stroke-width="1"/><line x1="1096.50" y1="503.5" x2="1096.50" y2="506.0" stroke="#333" stroke-width="1"/><line x1="1111.50" y1="503.5" x2="1111.50" y2="506.0" stroke="#333" stroke-width="1"/><line x1="1125.50" y1="503.5" x2="1125.50" y2="507.0" stroke="#333" stroke-width="1"/>
<g font-family="Liberation Sans" font-size="7.9" fill="#1a1a1a" stroke="#1a1a1a" stroke-width="0.15"><text x="58.30" y="515.3" text-anchor="middle">30,22</text><text x="114.46" y="515.3" text-anchor="middle">30,23</text><text x="170.62" y="515.3" text-anchor="middle">30,24</text><text x="226.78" y="515.3" text-anchor="middle">30,25</text><text x="282.94" y="515.3" text-anchor="middle">30,26</text><text x="339.10" y="515.3" text-anchor="middle">30,27</text><text x="395.26" y="515.3" text-anchor="middle">30,28</text><text x="451.42" y="515.3" text-anchor="middle">30,29</text><text x="507.58" y="515.3" text-anchor="middle">30,3</text><text x="563.74" y="515.3" text-anchor="middle">30,31</text><text x="619.90" y="515.3" text-anchor="middle">30,32</text><text x="676.06" y="515.3" text-anchor="middle">30,33</text><text x="732.22" y="515.3" text-anchor="middle">30,34</text><text x="788.38" y="515.3" text-anchor="middle">30,35</text><text x="844.54" y="515.3" text-anchor="middle">30,36</text><text x="900.70" y="515.3" text-anchor="middle">30,37</text><text x="956.86" y="515.3" text-anchor="middle">30,38</text><text x="1013.02" y="515.3" text-anchor="middle">30,39</text><text x="1069.18" y="515.3" text-anchor="middle">30,4</text><text x="1125.34" y="515.3" text-anchor="middle">30,41</text><text x="577.5" y="525" text-anchor="middle" font-size="8">Время, с</text></g>
<line x1="14" y1="126.4" x2="16" y2="126.4" stroke="#ff4040" stroke-width="1"/><line x1="13" y1="143.6" x2="16" y2="143.6" stroke="#ff4040" stroke-width="1"/><line x1="14" y1="160.8" x2="16" y2="160.8" stroke="#ff4040" stroke-width="1"/><line x1="13" y1="177.9" x2="16" y2="177.9" stroke="#ff4040" stroke-width="1"/><line x1="14" y1="195.1" x2="16" y2="195.1" stroke="#ff4040" stroke-width="1"/><line x1="13" y1="212.2" x2="16" y2="212.2" stroke="#ff4040" stroke-width="1"/><line x1="14" y1="229.3" x2="16" y2="229.3" stroke="#ff4040" stroke-width="1"/>
<g font-family="Liberation Sans" font-size="8.8" fill="#ff3a2a" text-anchor="end"><text x="10" y="146.8">5</text><text x="10" y="181.2">0</text><text x="10.3" y="215.3">-5</text></g>
<line x1="1139.5" y1="161.3" x2="1143.0" y2="161.3" stroke="#3040ff" stroke-width="1"/><line x1="1139.5" y1="171.3" x2="1141.5" y2="171.3" stroke="#3040ff" stroke-width="1"/><line x1="1139.5" y1="181.4" x2="1143.0" y2="181.4" stroke="#3040ff" stroke-width="1"/><line x1="1139.5" y1="191.4" x2="1141.5" y2="191.4" stroke="#3040ff" stroke-width="1"/><line x1="1139.5" y1="201.5" x2="1143.0" y2="201.5" stroke="#3040ff" stroke-width="1"/><line x1="1139.5" y1="211.6" x2="1141.5" y2="211.6" stroke="#3040ff" stroke-width="1"/><line x1="1139.5" y1="221.6" x2="1143.0" y2="221.6" stroke="#3040ff" stroke-width="1"/><line x1="1139.5" y1="231.7" x2="1141.5" y2="231.7" stroke="#3040ff" stroke-width="1"/><line x1="1139.5" y1="241.7" x2="1143.0" y2="241.7" stroke="#3040ff" stroke-width="1"/><line x1="1139.5" y1="251.8" x2="1141.5" y2="251.8" stroke="#3040ff" stroke-width="1"/><line x1="1139.5" y1="261.9" x2="1143.0" y2="261.9" stroke="#3040ff" stroke-width="1"/><line x1="1139.5" y1="271.9" x2="1141.5" y2="271.9" stroke="#3040ff" stroke-width="1"/><line x1="1139.5" y1="282.0" x2="1143.0" y2="282.0" stroke="#3040ff" stroke-width="1"/><line x1="1139.5" y1="292.0" x2="1141.5" y2="292.0" stroke="#3040ff" stroke-width="1"/><line x1="1139.5" y1="302.1" x2="1143.0" y2="302.1" stroke="#3040ff" stroke-width="1"/><line x1="1139.5" y1="312.2" x2="1141.5" y2="312.2" stroke="#3040ff" stroke-width="1"/><line x1="1139.5" y1="322.2" x2="1143.0" y2="322.2" stroke="#3040ff" stroke-width="1"/><line x1="1139.5" y1="332.3" x2="1141.5" y2="332.3" stroke="#3040ff" stroke-width="1"/><line x1="1139.5" y1="342.3" x2="1143.0" y2="342.3" stroke="#3040ff" stroke-width="1"/><line x1="1139.5" y1="352.4" x2="1141.5" y2="352.4" stroke="#3040ff" stroke-width="1"/><line x1="1139.5" y1="362.5" x2="1143.0" y2="362.5" stroke="#3040ff" stroke-width="1"/><line x1="1139.5" y1="372.5" x2="1141.5" y2="372.5" stroke="#3040ff" stroke-width="1"/>
<g font-family="Liberation Sans" font-size="8.2" fill="#2a3aff" stroke="#2a3aff" stroke-width="0.15"><text x="1149.0" y="164.2" text-anchor="middle">-2</text><text x="1149.0" y="184.3" text-anchor="middle">-1</text><text x="1148.9" y="204.4" text-anchor="middle">0</text><text x="1148.9" y="224.5" text-anchor="middle">1</text><text x="1148.9" y="244.6" text-anchor="middle">2</text><text x="1148.9" y="264.8" text-anchor="middle">3</text><text x="1148.9" y="284.9" text-anchor="middle">4</text><text x="1148.9" y="305.0" text-anchor="middle">5</text><text x="1148.9" y="325.1" text-anchor="middle">6</text><text x="1148.9" y="345.2" text-anchor="middle">7</text><text x="1148.9" y="365.4" text-anchor="middle">8</text></g>
<line x1="16.5" y1="144.5" x2="1139.5" y2="144.5" stroke="#ff2020" stroke-width="1"/><rect x="21" y="144.5" width="2" height="33.0" fill="#ff0000" opacity="0.5"/><rect x="26" y="144.5" width="2" height="33.0" fill="#ff0000" opacity="0.5"/><rect x="30" y="144.5" width="2" height="33.0" fill="#ff0000" opacity="0.5"/><rect x="36" y="144.5" width="1" height="33.0" fill="#ff0000"/><rect x="40" y="144.5" width="2" height="20.5" fill="#ff0000" opacity="0.5"/><rect x="45" y="144.5" width="1" height="33.0" fill="#ff0000"/><rect x="50" y="144.5" width="1" height="33.0" fill="#ff0000"/><rect x="55" y="144.5" width="1" height="33.0" fill="#ff0000"/><rect x="59" y="144.5" width="2" height="33.0" fill="#ff0000" opacity="0.5"/><rect x="64" y="144.5" width="2" height="33.0" fill="#ff0000" opacity="0.5"/><rect x="70" y="144.5" width="1" height="33.0" fill="#ff0000"/><rect x="74" y="144.5" width="2" height="33.0" fill="#ff0000" opacity="0.5"/><rect x="80" y="144.5" width="1" height="33.0" fill="#ff0000"/><rect x="84" y="144.5" width="1" height="33.0" fill="#ff0000"/><rect x="89" y="144.5" width="1" height="33.0" fill="#ff0000"/><rect x="94" y="144.5" width="2" height="33.0" fill="#ff0000" opacity="0.5"/><rect x="99" y="144.5" width="1" height="33.0" fill="#ff0000"/><rect x="104" y="144.5" width="1" height="33.0" fill="#ff0000"/><rect x="109" y="144.5" width="1" height="33.0" fill="#ff0000"/><rect x="114" y="144.5" width="1" height="33.0" fill="#ff0000"/><rect x="118" y="144.5" width="2" height="33.0" fill="#ff0000" opacity="0.5"/><rect x="124" y="144.5" width="1" height="33.0" fill="#ff0000"/><rect x="129" y="144.5" width="2" height="33.0" fill="#ff0000" opacity="0.5"/><rect x="134" y="144.5" width="2" height="33.0" fill="#ff0000" opacity="0.5"/><rect x="139" y="144.5" width="1" height="33.0" fill="#ff0000"/><rect x="144" y="144.5" width="1" height="33.0" fill="#ff0000"/><rect x="149" y="144.5" width="2" height="33.0" fill="#ff0000" opacity="0.5"/><rect x="154" y="144.5" width="2" height="33.0" fill="#ff0000" opacity="0.5"/><rect x="160" y="144.5" width="2" height="33.0" fill="#ff0000" opacity="0.5"/><rect x="165" y="144.5" width="1" height="33.0" fill="#ff0000"/><rect x="170" y="144.5" width="2" height="33.0" fill="#ff0000" opacity="0.5"/><rect x="175" y="144.5" width="1" height="33.0" fill="#ff0000"/><rect x="180" y="144.5" width="2" height="33.0" fill="#ff0000" opacity="0.5"/><rect x="185" y="144.5" width="2" height="33.0" fill="#ff0000" opacity="0.5"/><rect x="190" y="144.5" width="2" height="33.0" fill="#ff0000" opacity="0.5"/><rect x="195" y="144.5" width="2" height="33.0" fill="#ff0000" opacity="0.5"/><rect x="200" y="144.5" width="1" height="33.0" fill="#ff0000"/><rect x="205" y="144.5" width="1" height="33.0" fill="#ff0000"/><rect x="210" y="144.5" width="2" height="33.0" fill="#ff0000" opacity="0.5"/><rect x="215" y="144.5" width="2" height="33.0" fill="#ff0000" opacity="0.5"/><rect x="230" y="144.5" width="1" height="33.0" fill="#ff0000"/><rect x="234" y="144.5" width="2" height="33.0" fill="#ff0000" opacity="0.5"/><rect x="239" y="144.5" width="2" height="33.0" fill="#ff0000" opacity="0.5"/><rect x="244" y="144.5" width="1" height="33.0" fill="#ff0000"/><rect x="248" y="144.5" width="2" height="33.0" fill="#ff0000" opacity="0.5"/><rect x="253" y="144.5" width="2" height="33.0" fill="#ff0000" opacity="0.5"/><rect x="258" y="144.5" width="1" height="33.0" fill="#ff0000"/><rect x="263" y="144.5" width="1" height="33.0" fill="#ff0000"/><rect x="267" y="144.5" width="2" height="33.0" fill="#ff0000" opacity="0.5"/><rect x="272" y="144.5" width="2" height="33.0" fill="#ff0000" opacity="0.5"/><rect x="277" y="144.5" width="1" height="33.0" fill="#ff0000"/><rect x="282" y="144.5" width="2" height="25.5" fill="#ff0000" opacity="0.5"/><rect x="287" y="144.5" width="2" height="33.0" fill="#ff0000" opacity="0.5"/><rect x="292" y="144.5" width="1" height="33.0" fill="#ff0000"/><rect x="296" y="144.5" width="2" height="33.0" fill="#ff0000" opacity="0.5"/><rect x="302" y="144.5" width="1" height="33.0" fill="#ff0000"/><rect x="307" y="144.5" width="1" height="33.0" fill="#ff0000"/><rect x="311" y="144.5" width="1" height="33.0" fill="#ff0000"/><rect x="316" y="144.5" width="1" height="33.0" fill="#ff0000"/><rect x="321" y="144.5" width="2" height="33.0" fill="#ff0000" opacity="0.5"/><rect x="326" y="144.5" width="1" height="33.0" fill="#ff0000"/><rect x="330" y="144.5" width="2" height="33.0" fill="#ff0000" opacity="0.5"/><rect x="335" y="144.5" width="2" height="33.0" fill="#ff0000" opacity="0.5"/><rect x="340" y="144.5" width="1" height="33.0" fill="#ff0000"/><rect x="345" y="144.5" width="1" height="33.0" fill="#ff0000"/><rect x="350" y="144.5" width="1" height="33.0" fill="#ff0000"/><rect x="354" y="144.5" width="2" height="33.0" fill="#ff0000" opacity="0.5"/><rect x="359" y="144.5" width="2" height="33.0" fill="#ff0000" opacity="0.5"/><rect x="364" y="144.5" width="1" height="33.0" fill="#ff0000"/><rect x="368" y="144.5" width="1" height="33.0" fill="#ff0000"/><rect x="373" y="144.5" width="1" height="33.0" fill="#ff0000"/><rect x="377" y="144.5" width="1" height="33.0" fill="#ff0000"/><rect x="381" y="144.5" width="2" height="33.0" fill="#ff0000" opacity="0.5"/><rect x="386" y="144.5" width="1" height="33.0" fill="#ff0000"/><rect x="391" y="144.5" width="1" height="33.0" fill="#ff0000"/><rect x="395" y="144.5" width="2" height="33.0" fill="#ff0000" opacity="0.5"/><rect x="399" y="144.5" width="2" height="33.0" fill="#ff0000" opacity="0.5"/><rect x="404" y="144.5" width="1" height="33.0" fill="#ff0000"/><rect x="409" y="144.5" width="2" height="33.0" fill="#ff0000" opacity="0.5"/><rect x="413" y="144.5" width="2" height="33.0" fill="#ff0000" opacity="0.5"/><rect x="418" y="144.5" width="1" height="33.0" fill="#ff0000"/><rect x="422" y="144.5" width="2" height="33.0" fill="#ff0000" opacity="0.5"/><rect x="427" y="144.5" width="1" height="33.0" fill="#ff0000"/><rect x="432" y="144.5" width="1" height="33.0" fill="#ff0000"/><rect x="436" y="144.5" width="1" height="33.0" fill="#ff0000"/><rect x="441" y="144.5" width="2" height="33.0" fill="#ff0000" opacity="0.5"/><rect x="445" y="144.5" width="2" height="33.0" fill="#ff0000" opacity="0.5"/><rect x="450" y="144.5" width="2" height="33.0" fill="#ff0000" opacity="0.5"/><rect x="455" y="144.5" width="1" height="33.0" fill="#ff0000"/><rect x="460" y="144.5" width="1" height="33.0" fill="#ff0000"/><rect x="464" y="144.5" width="2" height="33.0" fill="#ff0000" opacity="0.5"/><rect x="469" y="144.5" width="2" height="33.0" fill="#ff0000" opacity="0.5"/><rect x="474" y="144.5" width="1" height="33.0" fill="#ff0000"/><rect x="479" y="144.5" width="1" height="33.0" fill="#ff0000"/><rect x="483" y="144.5" width="2" height="33.0" fill="#ff0000" opacity="0.5"/><rect x="488" y="144.5" width="2" height="33.0" fill="#ff0000" opacity="0.5"/><rect x="493" y="144.5" width="1" height="33.0" fill="#ff0000"/><rect x="497" y="144.5" width="2" height="33.0" fill="#ff0000" opacity="0.5"/><rect x="511" y="144.5" width="2" height="33.0" fill="#ff0000" opacity="0.5"/><rect x="516" y="144.5" width="1" height="33.0" fill="#ff0000"/><rect x="520" y="144.5" width="2" height="33.0" fill="#ff0000" opacity="0.5"/><rect x="525" y="144.5" width="2" height="33.0" fill="#ff0000" opacity="0.5"/><rect x="530" y="144.5" width="2" height="33.0" fill="#ff0000" opacity="0.5"/><rect x="534" y="144.5" width="2" height="33.0" fill="#ff0000" opacity="0.5"/><rect x="539" y="144.5" width="1" height="33.0" fill="#ff0000"/><rect x="544" y="144.5" width="1" height="33.0" fill="#ff0000"/><rect x="548" y="144.5" width="2" height="33.0" fill="#ff0000" opacity="0.5"/><rect x="553" y="144.5" width="2" height="33.0" fill="#ff0000" opacity="0.5"/><rect x="558" y="144.5" width="1" height="33.0" fill="#ff0000"/><rect x="563" y="144.5" width="1" height="33.0" fill="#ff0000"/><rect x="568" y="144.5" width="1" height="33.0" fill="#ff0000"/><rect x="572" y="144.5" width="2" height="33.0" fill="#ff0000" opacity="0.5"/><rect x="577" y="144.5" width="2" height="33.0" fill="#ff0000" opacity="0.5"/><rect x="583" y="144.5" width="1" height="33.0" fill="#ff0000"/><rect x="587" y="144.5" width="1" height="33.0" fill="#ff0000"/><rect x="592" y="144.5" width="1" height="33.0" fill="#ff0000"/><rect x="597" y="144.5" width="1" height="33.0" fill="#ff0000"/><rect x="601" y="144.5" width="2" height="15.5" fill="#ff0000" opacity="0.5"/><rect x="606" y="144.5" width="1" height="33.0" fill="#ff0000"/><rect x="611" y="144.5" width="2" height="33.0" fill="#ff0000" opacity="0.5"/><rect x="616" y="144.5" width="1" height="33.0" fill="#ff0000"/><rect x="621" y="144.5" width="1" height="33.0" fill="#ff0000"/><rect x="626" y="144.5" width="1" height="33.0" fill="#ff0000"/><rect x="630" y="144.5" width="1" height="33.0" fill="#ff0000"/><rect x="635" y="144.5" width="1" height="33.0" fill="#ff0000"/><rect x="640" y="144.5" width="2" height="33.0" fill="#ff0000" opacity="0.5"/><rect x="644" y="144.5" width="2" height="33.0" fill="#ff0000" opacity="0.5"/><rect x="649" y="144.5" width="2" height="15.5" fill="#ff0000" opacity="0.5"/><rect x="654" y="144.5" width="1" height="33.0" fill="#ff0000"/><rect x="659" y="144.5" width="2" height="33.0" fill="#ff0000" opacity="0.5"/><rect x="664" y="144.5" width="1" height="33.0" fill="#ff0000"/><rect x="668" y="144.5" width="2" height="33.0" fill="#ff0000" opacity="0.5"/><rect x="673" y="144.5" width="2" height="33.0" fill="#ff0000" opacity="0.5"/><rect x="679" y="144.5" width="1" height="33.0" fill="#ff0000"/><rect x="684" y="144.5" width="1" height="33.0" fill="#ff0000"/><rect x="689" y="144.5" width="1" height="33.0" fill="#ff0000"/><rect x="694" y="144.5" width="1" height="33.0" fill="#ff0000"/><rect x="699" y="144.5" width="1" height="33.0" fill="#ff0000"/><rect x="704" y="144.5" width="1" height="33.0" fill="#ff0000"/><rect x="709" y="144.5" width="1" height="33.0" fill="#ff0000"/><rect x="714" y="144.5" width="1" height="33.0" fill="#ff0000"/><rect x="719" y="144.5" width="1" height="33.0" fill="#ff0000"/><rect x="724" y="144.5" width="1" height="33.0" fill="#ff0000"/><rect x="729" y="144.5" width="1" height="33.0" fill="#ff0000"/><rect x="734" y="144.5" width="2" height="33.0" fill="#ff0000" opacity="0.5"/><rect x="739" y="144.5" width="2" height="33.0" fill="#ff0000" opacity="0.5"/><rect x="744" y="144.5" width="2" height="33.0" fill="#ff0000" opacity="0.5"/><rect x="750" y="144.5" width="1" height="33.0" fill="#ff0000"/><rect x="754" y="144.5" width="2" height="33.0" fill="#ff0000" opacity="0.5"/><rect x="760" y="144.5" width="1" height="33.0" fill="#ff0000"/><rect x="765" y="144.5" width="1" height="33.0" fill="#ff0000"/><rect x="769" y="144.5" width="2" height="33.0" fill="#ff0000" opacity="0.5"/><rect x="774" y="144.5" width="2" height="33.0" fill="#ff0000" opacity="0.5"/><rect x="780" y="144.5" width="1" height="33.0" fill="#ff0000"/><rect x="784" y="144.5" width="2" height="33.0" fill="#ff0000" opacity="0.5"/><rect x="789" y="144.5" width="1" height="33.0" fill="#ff0000"/><rect x="804" y="144.5" width="2" height="33.0" fill="#ff0000" opacity="0.5"/><rect x="809" y="144.5" width="1" height="33.0" fill="#ff0000"/><rect x="814" y="144.5" width="1" height="25.5" fill="#ff0000"/><rect x="818" y="144.5" width="2" height="33.0" fill="#ff0000" opacity="0.5"/><rect x="823" y="144.5" width="2" height="33.0" fill="#ff0000" opacity="0.5"/><rect x="828" y="144.5" width="2" height="33.0" fill="#ff0000" opacity="0.5"/><rect x="833" y="144.5" width="2" height="33.0" fill="#ff0000" opacity="0.5"/><rect x="837" y="144.5" width="2" height="33.0" fill="#ff0000" opacity="0.5"/><rect x="842" y="144.5" width="1" height="33.0" fill="#ff0000"/><rect x="847" y="144.5" width="1" height="33.0" fill="#ff0000"/><rect x="852" y="144.5" width="1" height="33.0" fill="#ff0000"/><rect x="857" y="144.5" width="1" height="33.0" fill="#ff0000"/><rect x="862" y="144.5" width="1" height="33.0" fill="#ff0000"/><rect x="867" y="144.5" width="1" height="33.0" fill="#ff0000"/><rect x="871" y="144.5" width="2" height="33.0" fill="#ff0000" opacity="0.5"/><rect x="876" y="144.5" width="2" height="33.0" fill="#ff0000" opacity="0.5"/><rect x="881" y="144.5" width="2" height="33.0" fill="#ff0000" opacity="0.5"/><rect x="886" y="144.5" width="1" height="15.5" fill="#ff0000"/><rect x="891" y="144.5" width="1" height="33.0" fill="#ff0000"/><rect x="896" y="144.5" width="1" height="33.0" fill="#ff0000"/><rect x="900" y="144.5" width="2" height="33.0" fill="#ff0000" opacity="0.5"/><rect x="906" y="144.5" width="1" height="33.0" fill="#ff0000"/><rect x="910" y="144.5" width="2" height="33.0" fill="#ff0000" opacity="0.5"/><rect x="915" y="144.5" width="2" height="33.0" fill="#ff0000" opacity="0.5"/><rect x="919" y="144.5" width="2" height="33.0" fill="#ff0000" opacity="0.5"/><rect x="924" y="144.5" width="2" height="33.0" fill="#ff0000" opacity="0.5"/><rect x="929" y="144.5" width="2" height="33.0" fill="#ff0000" opacity="0.5"/><rect x="933" y="144.5" width="2" height="33.0" fill="#ff0000" opacity="0.5"/><rect x="938" y="144.5" width="2" height="33.0" fill="#ff0000" opacity="0.5"/><rect x="943" y="144.5" width="2" height="33.0" fill="#ff0000" opacity="0.5"/><rect x="947" y="144.5" width="2" height="33.0" fill="#ff0000" opacity="0.5"/><rect x="952" y="144.5" width="1" height="33.0" fill="#ff0000"/><rect x="957" y="144.5" width="1" height="33.0" fill="#ff0000"/><rect x="960" y="144.5" width="2" height="33.0" fill="#ff0000" opacity="0.5"/><rect x="965" y="144.5" width="2" height="33.0" fill="#ff0000" opacity="0.5"/><rect x="970" y="144.5" width="1" height="33.0" fill="#ff0000"/><rect x="975" y="144.5" width="1" height="33.0" fill="#ff0000"/><rect x="979" y="144.5" width="1" height="33.0" fill="#ff0000"/><rect x="984" y="144.5" width="1" height="33.0" fill="#ff0000"/><rect x="988" y="144.5" width="1" height="33.0" fill="#ff0000"/><rect x="992" y="144.5" width="2" height="33.0" fill="#ff0000" opacity="0.5"/><rect x="997" y="144.5" width="2" height="33.0" fill="#ff0000" opacity="0.5"/><rect x="1002" y="144.5" width="1" height="33.0" fill="#ff0000"/><rect x="1006" y="144.5" width="2" height="33.0" fill="#ff0000" opacity="0.5"/><rect x="1012" y="144.5" width="1" height="33.0" fill="#ff0000"/><rect x="1016" y="144.5" width="1" height="33.0" fill="#ff0000"/><rect x="1020" y="144.5" width="2" height="33.0" fill="#ff0000" opacity="0.5"/><rect x="1026" y="144.5" width="1" height="33.0" fill="#ff0000"/><rect x="1030" y="144.5" width="2" height="33.0" fill="#ff0000" opacity="0.5"/><rect x="1035" y="144.5" width="1" height="33.0" fill="#ff0000"/><rect x="1040" y="144.5" width="1" height="33.0" fill="#ff0000"/><rect x="1045" y="144.5" width="1" height="33.0" fill="#ff0000"/><rect x="1048" y="144.5" width="2" height="33.0" fill="#ff0000" opacity="0.5"/><rect x="1053" y="144.5" width="2" height="20.5" fill="#ff0000" opacity="0.5"/><rect x="1058" y="144.5" width="1" height="33.0" fill="#ff0000"/><rect x="1063" y="144.5" width="1" height="33.0" fill="#ff0000"/><rect x="1068" y="144.5" width="1" height="33.0" fill="#ff0000"/><rect x="1073" y="144.5" width="1" height="33.0" fill="#ff0000"/><rect x="1086" y="144.5" width="2" height="33.0" fill="#ff0000" opacity="0.5"/><rect x="1090" y="144.5" width="2" height="33.0" fill="#ff0000" opacity="0.5"/><rect x="1095" y="144.5" width="1" height="33.0" fill="#ff0000"/><rect x="1100" y="144.5" width="1" height="33.0" fill="#ff0000"/><rect x="1104" y="144.5" width="1" height="33.0" fill="#ff0000"/><rect x="1109" y="144.5" width="1" height="33.0" fill="#ff0000"/><rect x="1113" y="144.5" width="2" height="33.0" fill="#ff0000" opacity="0.5"/><rect x="1118" y="144.5" width="2" height="33.0" fill="#ff0000" opacity="0.5"/><rect x="1122" y="144.5" width="1" height="33.0" fill="#ff0000"/><rect x="1127" y="144.5" width="2" height="33.0" fill="#ff0000" opacity="0.5"/><rect x="1132" y="144.5" width="1" height="33.0" fill="#ff0000"/><rect x="1136" y="144.5" width="1" height="33.0" fill="#ff0000"/>
<path d="M16.5,301.5 L18.5,301.5 L20.5,301.5 L22.5,301.5 L24.5,301.5 L26.5,301.5 L28.5,301.5 L30.5,301.0 L32.5,301.5 L34.5,301.5 V201.5 L36.5,201.9 L38.5,201.9 L40.5,201.5 L42.5,201.5 L44.5,201.5 L46.5,201.9 L48.5,201.0 L50.5,201.5 L52.5,201.9 L54.5,201.5 L56.5,201.5 L58.4,201.5 Q60.5,202.5 60.8,209.5 L61.0,301.5 L63.0,301.5 L65.0,301.9 L67.0,301.0 L69.0,301.5 L71.0,301.0 L73.0,301.5 L75.0,301.5 L77.0,301.5 L79.0,301.9 L81.0,301.9 L83.0,301.9 L85.0,301.5 L87.0,301.9 L89.0,301.0 L91.0,301.5 L93.0,301.5 L95.0,301.5 L97.0,301.5 L99.0,301.0 L101.0,301.0 L103.0,301.0 L105.0,301.5 L107.0,301.5 L109.0,301.9 L111.0,301.5 L113.0,301.9 L115.0,301.0 L117.0,301.5 L119.0,301.5 L121.0,301.9 L123.0,301.0 L125.0,301.0 L127.0,301.9 L129.0,301.9 L131.0,301.9 L133.0,301.5 L135.0,301.5 L137.0,301.0 L139.0,301.5 L141.0,301.9 L143.0,301.5 L145.0,301.0 L147.0,301.9 L149.0,301.5 L151.0,301.9 L153.0,301.0 L155.0,301.9 L157.0,301.5 L159.0,301.5 L161.0,301.5 L163.0,301.5 L165.0,301.5 L167.0,301.0 L169.0,301.0 L171.0,301.5 L173.0,301.0 L175.0,301.5 L177.0,301.0 L179.0,301.5 L181.0,301.9 L183.5,301.5 V201.5 L185.5,201.9 L187.5,201.9 L189.5,201.5 L191.5,201.5 L193.5,201.5 L195.5,201.9 L197.5,201.9 L199.5,201.9 L201.5,201.0 L203.5,201.5 L205.5,201.9 L207.5,201.0 L209.8,201.5 L211.0,204.5 L211.0,301.5 L213.0,301.9 L215.0,301.0 L217.0,301.5 L219.0,301.0 L221.0,301.5 L223.0,301.0 L225.0,301.0 L227.0,301.9 L229.0,301.5 L231.0,301.5 L233.0,301.5 L235.0,301.0 L237.0,301.0 L239.0,301.0 L241.0,301.5 L243.0,301.9 L245.0,301.9 L247.0,301.5 L249.0,301.0 L251.0,301.9 L253.0,301.0 L255.0,301.5 L257.0,301.0 L259.0,301.5 L261.0,301.5 L263.0,301.0 L265.0,301.5 L267.0,301.5 L269.0,301.0 L271.0,301.9 L273.0,301.0 L275.0,301.5 L277.0,301.0 L279.0,301.9 L281.0,301.5 L283.0,301.9 L285.0,301.5 L287.0,301.5 L289.0,301.5 L291.0,301.9 L293.0,301.9 L295.0,301.5 L297.0,301.0 L299.0,301.9 L301.0,301.5 L303.0,301.5 L305.0,301.5 L307.0,301.9 L309.0,301.9 L311.0,301.0 L313.0,301.0 L315.0,301.0 L317.0,301.0 L319.0,301.0 L321.0,301.9 L323.0,301.5 L325.0,301.0 L327.0,301.9 L329.5,301.5 V201.5 L331.5,201.9 L333.5,201.5 L335.5,201.5 L337.5,201.5 L339.5,201.5 L341.5,201.5 L343.5,201.9 L345.5,201.5 L347.5,201.9 L349.5,201.0 L351.5,201.9 L353.5,201.9 L355.5,201.5 L357.5,201.5 L359.5,201.5 L361.5,201.5 L363.5,201.5 L365.5,201.0 L367.5,201.5 L369.5,201.0 L371.5,201.5 L373.5,201.0 L375.5,201.0 L377.5,201.5 L379.5,201.5 L381.5,201.9 L383.5,201.9 L385.5,201.9 L387.5,201.5 L389.5,201.9 L391.5,201.0 L393.5,201.0 L395.5,201.5 L397.5,201.9 L399.5,201.0 L401.5,201.0 L403.5,201.5 L405.5,201.5 L407.5,201.5 L409.5,201.0 L411.5,201.5 L413.5,201.9 L415.5,201.9 L417.5,201.9 L419.5,201.9 L421.5,201.0 L423.5,201.5 L425.5,201.5 L427.5,201.5 L430.5,201.5 V301.5 L432.5,301.9 L434.5,301.9 L436.5,301.9 L438.5,301.5 L440.5,301.5 L442.5,301.9 L444.5,301.9 L446.5,301.9 L448.5,301.5 L450.5,301.5 L452.5,301.5 L454.5,301.5 L456.5,301.5 L458.5,301.5 L460.5,301.9 L462.5,301.5 L464.5,301.5 L466.5,301.5 L468.5,301.5 V201.5 L470.5,201.5 L472.5,201.5 L474.5,201.5 L476.5,201.0 L478.5,201.5 L480.5,201.0 L482.5,201.9 L484.5,201.5 L486.5,201.5 L488.5,201.5 L490.5,201.0 L492.5,201.5 L494.5,201.9 L496.5,201.0 L498.5,201.5 L500.5,201.5 L502.5,201.5 L504.5,201.0 L506.5,201.9 L508.5,201.0 L510.5,201.0 L512.5,201.5 L514.5,201.9 L516.5,201.5 L518.5,201.5 L520.5,201.5 L522.5,201.9 L524.5,201.0 L526.5,201.5 L528.5,201.5 L530.5,201.5 L532.5,201.9 L534.5,201.9 L536.5,201.5 L538.5,201.0 L540.5,201.5 L542.5,201.9 L544.5,201.0 L546.5,201.5 L548.5,201.9 L550.5,201.5 L552.5,201.0 L554.5,201.9 L556.5,201.0 L558.5,201.9 L560.5,201.5 L562.5,201.5 L564.5,201.0 L566.5,201.5 L568.5,201.5 L571.5,201.5 V301.5 L573.5,301.9 L575.5,301.5 L577.5,301.0 L579.5,301.5 L581.5,301.5 L583.5,301.9 L585.5,301.5 L587.5,301.0 L589.5,301.0 L591.5,301.5 L593.5,301.9 L595.5,301.5 L597.5,301.5 L599.5,301.9 L601.5,301.9 L603.5,301.5 L605.5,301.5 L607.5,301.9 L609.5,301.5 V201.5 L611.5,201.5 L613.5,201.5 L615.5,201.5 L617.5,201.5 L619.5,201.9 L621.5,201.5 L623.5,201.5 L625.5,201.5 L627.5,201.9 L629.5,201.9 L631.5,201.0 L633.5,201.5 L635.5,201.5 V301.5 L637.5,301.5 L639.5,301.5 L641.5,301.0 L643.5,301.5 L645.5,301.5 L647.5,301.9 L649.5,301.5 L651.5,301.0 L653.5,301.9 L655.5,301.0 L657.5,301.0 L659.5,301.9 L661.5,301.5 L663.5,301.5 L665.5,301.5 L667.5,301.5 L669.5,301.0 L671.5,301.5 L673.5,301.0 L675.5,301.9 L677.5,301.5 L679.5,301.5 L681.5,301.9 L683.5,301.0 L685.5,301.0 L687.5,301.9 L689.5,301.5 L691.5,301.5 L693.5,301.9 L695.5,301.5 L697.5,301.0 L699.5,301.9 L701.5,301.5 L703.5,301.0 L705.5,301.0 L707.5,301.9 L709.5,301.5 L711.5,301.9 L713.5,301.5 L715.5,301.9 L717.5,301.5 L719.5,301.9 L721.5,301.5 L723.5,301.9 L725.5,301.5 L727.5,301.5 L729.5,301.0 L731.5,301.5 L733.5,301.5 L735.5,301.0 L737.5,301.0 L739.5,301.0 L741.5,301.0 L743.5,301.5 L745.5,301.0 L747.5,301.0 L749.5,301.0 L751.5,301.0 L753.5,301.5 L755.5,301.5 L758.5,301.5 V201.5 L760.5,201.5 L762.5,201.5 L764.5,201.5 L766.5,201.9 L768.5,201.9 L770.5,201.9 L772.5,201.0 L774.5,201.9 L776.5,201.9 L778.5,201.5 L780.5,201.9 L782.5,201.5 L785.5,201.5 V301.5 L787.5,301.5 L789.5,301.0 L791.5,301.5 L793.5,301.5 L795.5,301.0 L797.5,301.0 L799.5,301.9 L801.5,301.0 L803.5,301.5 L805.5,301.5 L807.5,301.9 L809.5,301.5 L811.5,301.5 L813.5,301.9 L815.5,301.5 L817.5,301.5 L819.5,301.9 L821.5,301.0 L823.5,301.5 L825.5,301.9 L827.5,301.5 L829.5,301.5 L831.5,301.0 L833.5,301.5 L835.5,301.5 L837.5,301.5 L839.5,301.9 L841.5,301.9 L843.5,301.9 L845.5,301.5 L847.5,301.5 L849.5,301.5 L851.5,301.9 L853.5,301.9 L855.5,301.5 L857.5,301.5 L859.5,301.0 L861.5,301.0 L863.5,301.0 L865.5,301.0 L867.5,301.0 L869.5,301.0 L871.5,301.0 L873.5,301.5 L875.5,301.9 L877.5,301.5 L879.5,301.5 L881.5,301.5 L883.5,301.5 L885.5,301.5 L887.5,301.0 L889.5,301.5 L891.5,301.0 L893.5,301.5 L895.5,301.9 L897.5,301.0 L899.5,301.5 L901.5,301.5 L904.5,301.5 V201.5 L906.5,201.5 L908.5,201.9 L910.5,201.5 L912.5,201.5 L914.5,201.5 L916.5,201.9 L918.5,201.5 L920.5,201.9 L922.5,201.0 L924.5,201.5 L926.5,201.0 L928.5,201.5 L930.5,201.5 L932.5,201.5 L934.5,201.5 L936.5,201.5 L938.5,201.5 L940.5,201.0 L942.5,201.5 L944.5,201.9 L946.5,201.0 L948.5,201.5 L950.5,201.5 L952.5,201.0 L954.5,201.5 L956.5,201.5 L958.5,201.0 L960.5,201.0 L962.5,201.5 L964.5,201.5 L966.5,201.5 L968.5,201.0 L970.5,201.5 L972.5,201.5 L974.5,201.5 L976.5,201.0 L978.5,201.9 L980.5,201.0 L982.5,201.5 L984.5,201.0 L986.5,201.5 L988.5,201.5 L990.5,201.5 L992.5,201.9 L994.5,201.9 L996.5,201.5 L998.5,201.9 L1000.5,201.5 L1002.5,201.9 L1005.5,201.5 V301.5 L1007.5,301.5 L1009.5,301.5 L1011.5,301.5 L1013.5,301.9 L1015.5,301.0 L1017.5,301.9 L1019.5,301.0 L1021.5,301.0 L1023.5,301.9 L1025.5,301.5 L1027.5,301.0 L1029.5,301.0 L1031.5,301.9 L1033.5,301.9 L1035.5,301.5 L1037.5,301.0 L1039.5,301.5 L1041.5,301.9 L1043.5,301.5 V201.5 L1045.5,201.9 L1047.5,201.5 L1049.5,201.5 L1051.5,201.9 L1053.5,201.5 L1055.5,201.9 L1057.5,201.5 L1059.5,201.5 L1061.5,201.9 L1063.5,201.0 L1065.5,201.9 L1067.5,201.5 L1069.5,201.5 L1071.5,201.5 L1073.5,201.5 L1075.5,201.5 L1077.5,201.9 L1079.5,201.5 L1081.5,201.0 L1083.5,201.5 L1085.5,201.5 L1087.5,201.0 L1089.5,201.0 L1091.5,201.5 L1093.5,201.5 L1095.5,201.5 L1097.5,201.5 L1099.5,201.9 L1101.5,201.9 L1103.5,201.5 L1105.5,201.0 L1107.5,201.5 L1109.5,201.5 L1111.5,201.9 L1113.5,201.0 L1115.5,201.5 L1117.5,201.9 L1119.5,201.5 L1121.5,201.5 L1123.5,201.5 L1125.5,201.9 L1127.5,201.5 L1129.5,201.9 L1131.5,201.5 L1133.5,201.5 L1135.5,201.5 L1137.5,201.9 L1139.5,201.5 " fill="none" stroke="#3636ff" stroke-width="1.05"/><line x1="329.5" y1="301" x2="329.5" y2="307" stroke="#3636ff" stroke-width="1"/>
<line x1="16.5" y1="118.5" x2="16.5" y2="503.5" stroke="#a040b0" stroke-width="1.3"/>
<line x1="1139.5" y1="118.5" x2="1139.5" y2="503.5" stroke="#50a850" stroke-width="1.3"/>
<path d="M10.8,112 L22.2,112 L16.5,118.3 Z" fill="#7a0d8a"/><text x="16.5" y="116.3" font-family="Liberation Sans" font-size="5" font-weight="bold" fill="#fff" text-anchor="middle">1</text>
<path d="M1133.8,112 L1145.2,112 L1139.5,118.3 Z" fill="#1e8a2e"/><text x="1139.5" y="116.3" font-family="Liberation Sans" font-size="4.5" fill="#cfc" text-anchor="middle">2</text>
</svg>
<div class="a" style="left:0.0px;top:528.0px;width:1156.0px;height:13.0px;background:#f7f7f7"></div>
<div class="a" style="left:0.0px;top:541.0px;width:1156.0px;height:110.0px;background:#f0f0f0"></div>
<div class="a" style="left:0.0px;top:528.0px;width:13.5px;height:12.5px;background:#f0f0f0;border-right:1px solid #8a8a8a;border-bottom:1px solid #8a8a8a;border-left:1px solid #fff;border-top:1px solid #fff"></div>
<div class="a" style="left:13.5px;top:528.0px;width:36.3px;height:12.5px;background:#ececec;border-right:1px solid #8a8a8a;border-bottom:1px solid #8a8a8a;border-left:1px solid #fff;border-top:1px solid #fff"></div>
<div class="a" style="left:49.8px;top:528.0px;width:14.2px;height:12.5px;background:#f0f0f0;border-right:1px solid #8a8a8a;border-bottom:1px solid #8a8a8a;border-left:1px solid #fff;border-top:1px solid #fff"></div>
<div class="a" style="left:64.0px;top:528.0px;width:12.5px;height:12.5px;background:#f0f0f0;border-right:1px solid #8a8a8a;border-bottom:1px solid #8a8a8a;border-left:1px solid #fff;border-top:1px solid #fff"></div>
<svg class="a" style="left:2px;top:529.5px;" width="10" height="10" viewBox="0 0 10 10"><circle cx="5" cy="5" r="4" fill="#fff" stroke="#222" stroke-width="0.9"/><path d="M2.6,5 H7.4" stroke="#1a1aa0" stroke-width="1.5"/></svg>
<div class="t" style="left:32.5px;top:534.8px;transform:translate(-50%,-50%);font-size:8.6px;color:#333;font-weight:normal;">0,2 с</div>
<svg class="a" style="left:52.5px;top:529.5px;" width="10" height="10" viewBox="0 0 10 10"><circle cx="5" cy="5" r="4" fill="#fff" stroke="#222" stroke-width="0.9"/><path d="M2.6,5 H7.4 M5,2.6 V7.4" stroke="#a01010" stroke-width="1.5"/></svg>
<svg class="a" style="left:67.5px;top:531px;" width="6" height="7" viewBox="0 0 6 7"><path d="M5,0.5 L5,6.5 L1,3.5Z" fill="#111"/></svg>
<div class="a" style="left:1132.0px;top:528.0px;width:7.5px;height:12.5px;background:#ececec;border-right:1px solid #8a8a8a;border-bottom:1px solid #8a8a8a;border-left:1px solid #fff;border-top:1px solid #fff"></div>
<div class="a" style="left:1143.5px;top:528.0px;width:12.5px;height:12.5px;background:#f0f0f0;border-right:1px solid #8a8a8a;border-bottom:1px solid #8a8a8a;border-left:1px solid #fff;border-top:1px solid #fff"></div>
<svg class="a" style="left:1148.5px;top:531px;" width="6" height="7" viewBox="0 0 6 7"><path d="M1,0.5 L1,6.5 L5,3.5Z" fill="#111"/></svg>
<div class="a" style="left:347.0px;top:544.3px;width:462.7px;height:4.5px;background:#fff;border:1px solid #c8c8c8"></div>
<div class="a" style="left:355.0px;top:546.2px;width:445.0px;height:1.0px;background:repeating-linear-gradient(90deg,#6a9ee8 0 1px,transparent 1px 2.5px)"></div>
<svg class="a" style="left:350px;top:545px;" width="6" height="4" viewBox="0 0 6 4"><path d="M0,0 L5,0 L2.5,3Z" fill="#3a8ae8"/></svg>
<svg class="a" style="left:801.5px;top:545px;" width="6" height="4" viewBox="0 0 6 4"><path d="M0,0 L5,0 L2.5,3Z" fill="#3a8ae8"/></svg>
<div class="a" style="left:363.5px;top:566.0px;width:124.8px;height:81.5px;border:1px solid #c8c8c8;background:#f0f0f0"></div>
<div class="a" style="left:363.5px;top:551.0px;width:13.5px;height:15.0px;background:#ff0a0a;border-radius:2px 2px 0 0"></div>
<div class="t" style="left:370.3px;top:559.3px;transform:translate(-50%,-50%);font-size:8.3px;color:#fff;font-weight:bold;">1</div>
<div class="a" style="left:377.5px;top:552.5px;width:10.5px;height:13.5px;background:#3a4af0"></div>
<div class="t" style="left:382.8px;top:559.5px;transform:translate(-50%,-50%);font-size:8.3px;color:#fff;font-weight:normal;">2</div>
<div class="a" style="left:380.5px;top:553.8px;width:4.5px;height:0.6px;background:#fff"></div>
<div class="a" style="left:388.5px;top:552.5px;width:11.6px;height:13.5px;background:linear-gradient(#f6f6f6,#e4e4e4);border:1px solid #d0d0d0;border-bottom:none"></div>
<div class="t" style="left:394.3px;top:559.5px;transform:translate(-50%,-50%);font-size:8.3px;color:#a8a8a8;font-weight:normal;">3</div>
<div class="a" style="left:400.8px;top:552.5px;width:11.6px;height:13.5px;background:linear-gradient(#f6f6f6,#e4e4e4);border:1px solid #d0d0d0;border-bottom:none"></div>
<div class="t" style="left:406.6px;top:559.5px;transform:translate(-50%,-50%);font-size:8.3px;color:#a8a8a8;font-weight:normal;">4</div>
<div class="a" style="left:413.0px;top:552.5px;width:11.6px;height:13.5px;background:linear-gradient(#f6f6f6,#e4e4e4);border:1px solid #d0d0d0;border-bottom:none"></div>
<div class="t" style="left:418.8px;top:559.5px;transform:translate(-50%,-50%);font-size:8.3px;color:#a8a8a8;font-weight:normal;">5</div>
<div class="a" style="left:425.2px;top:552.5px;width:11.6px;height:13.5px;background:linear-gradient(#f6f6f6,#e4e4e4);border:1px solid #d0d0d0;border-bottom:none"></div>
<div class="t" style="left:431.1px;top:559.5px;transform:translate(-50%,-50%);font-size:8.3px;color:#a8a8a8;font-weight:normal;">6</div>
<div class="a" style="left:437.5px;top:552.5px;width:11.6px;height:13.5px;background:linear-gradient(#f6f6f6,#e4e4e4);border:1px solid #d0d0d0;border-bottom:none"></div>
<div class="t" style="left:443.3px;top:559.5px;transform:translate(-50%,-50%);font-size:8.3px;color:#a8a8a8;font-weight:normal;">7</div>
<div class="a" style="left:449.8px;top:552.5px;width:11.6px;height:13.5px;background:linear-gradient(#f6f6f6,#e4e4e4);border:1px solid #d0d0d0;border-bottom:none"></div>
<div class="t" style="left:455.6px;top:559.5px;transform:translate(-50%,-50%);font-size:8.3px;color:#a8a8a8;font-weight:normal;">8</div>
<div class="a" style="left:462.0px;top:552.5px;width:11.6px;height:13.5px;background:linear-gradient(#f6f6f6,#e4e4e4);border:1px solid #d0d0d0;border-bottom:none"></div>
<div class="t" style="left:467.8px;top:559.5px;transform:translate(-50%,-50%);font-size:8.3px;color:#a8a8a8;font-weight:normal;">T</div>
<div class="a" style="left:474.2px;top:552.5px;width:11.6px;height:13.5px;background:linear-gradient(#f6f6f6,#e4e4e4);border:1px solid #d0d0d0;border-bottom:none"></div>
<div class="t" style="left:480.1px;top:559.5px;transform:translate(-50%,-50%);font-size:8.3px;color:#a8a8a8;font-weight:normal;">E</div>
<div class="a" style="left:363.5px;top:566.0px;width:124.8px;height:11.8px;background:#ff0a0a"></div>
<div class="t" style="left:426.0px;top:571.9px;transform:translate(-50%,-50%);font-size:8.4px;color:#fff;font-weight:bold;-webkit-text-stroke:0.3px #fff">Аналоговый канал 1</div>
<svg class="a" style="left:361.4px;top:564.4px;" width="80" height="80" viewBox="0 0 80 80"><defs><radialGradient id="kg401" cx="0.45" cy="0.35" r="0.7"><stop offset="0" stop-color="#f4f4f4"/><stop offset="0.55" stop-color="#c8c8c8"/><stop offset="1" stop-color="#9a9a9a"/></radialGradient></defs><circle cx="40" cy="40" r="13.9" fill="url(#kg401)"/><circle cx="40" cy="40" r="8.4" fill="#f4f4f4"/><line x1="30.17" y1="49.83" x2="29.11" y2="50.89" stroke="#b0b0b0" stroke-width="0.8"/><line x1="33.05" y1="52.04" x2="32.30" y2="53.34" stroke="#b0b0b0" stroke-width="0.8"/><line x1="36.40" y1="53.43" x2="36.01" y2="54.88" stroke="#b0b0b0" stroke-width="0.8"/><line x1="40.00" y1="53.90" x2="40.00" y2="55.40" stroke="#b0b0b0" stroke-width="0.8"/><line x1="43.60" y1="53.43" x2="43.99" y2="54.88" stroke="#b0b0b0" stroke-width="0.8"/><line x1="46.95" y1="52.04" x2="47.70" y2="53.34" stroke="#b0b0b0" stroke-width="0.8"/><line x1="49.83" y1="49.83" x2="50.89" y2="50.89" stroke="#b0b0b0" stroke-width="0.8"/><line x1="52.04" y1="46.95" x2="53.34" y2="47.70" stroke="#b0b0b0" stroke-width="0.8"/><line x1="53.43" y1="43.60" x2="54.88" y2="43.99" stroke="#b0b0b0" stroke-width="0.8"/><line x1="53.90" y1="40.00" x2="55.40" y2="40.00" stroke="#b0b0b0" stroke-width="0.8"/><line x1="53.43" y1="36.40" x2="54.88" y2="36.01" stroke="#b0b0b0" stroke-width="0.8"/><line x1="52.04" y1="33.05" x2="53.34" y2="32.30" stroke="#b0b0b0" stroke-width="0.8"/><line x1="49.83" y1="30.17" x2="50.89" y2="29.11" stroke="#b0b0b0" stroke-width="0.8"/><line x1="46.95" y1="27.96" x2="47.70" y2="26.66" stroke="#b0b0b0" stroke-width="0.8"/><line x1="43.60" y1="26.57" x2="43.99" y2="25.12" stroke="#b0b0b0" stroke-width="0.8"/><line x1="40.00" y1="26.10" x2="40.00" y2="24.60" stroke="#b0b0b0" stroke-width="0.8"/><line x1="36.40" y1="26.57" x2="36.01" y2="25.12" stroke="#b0b0b0" stroke-width="0.8"/><line x1="33.05" y1="27.96" x2="32.30" y2="26.66" stroke="#b0b0b0" stroke-width="0.8"/><line x1="30.17" y1="30.17" x2="29.11" y2="29.11" stroke="#b0b0b0" stroke-width="0.8"/><line x1="27.96" y1="33.05" x2="26.66" y2="32.30" stroke="#b0b0b0" stroke-width="0.8"/><line x1="26.57" y1="36.40" x2="25.12" y2="36.01" stroke="#b0b0b0" stroke-width="0.8"/><line x1="26.10" y1="40.00" x2="24.60" y2="40.00" stroke="#b0b0b0" stroke-width="0.8"/><line x1="26.57" y1="43.60" x2="25.12" y2="43.99" stroke="#b0b0b0" stroke-width="0.8"/><line x1="27.96" y1="46.95" x2="26.66" y2="47.70" stroke="#b0b0b0" stroke-width="0.8"/><line x1="30.17" y1="49.83" x2="29.11" y2="50.89" stroke="#b0b0b0" stroke-width="0.8"/><line x1="31.07" y1="50.65" x2="28.49" y2="53.71" stroke="#222" stroke-width="0.9"/><line x1="27.40" y1="45.87" x2="23.78" y2="47.56" stroke="#222" stroke-width="0.9"/><line x1="27.40" y1="34.13" x2="23.78" y2="32.44" stroke="#222" stroke-width="0.9"/><line x1="32.63" y1="28.21" x2="30.51" y2="24.82" stroke="#222" stroke-width="0.9"/><line x1="38.79" y1="26.15" x2="38.44" y2="22.17" stroke="#222" stroke-width="0.9"/><line x1="47.57" y1="28.34" x2="49.75" y2="24.99" stroke="#222" stroke-width="0.9"/><line x1="52.38" y1="33.69" x2="55.95" y2="31.87" stroke="#222" stroke-width="0.9"/><line x1="53.60" y1="42.89" x2="57.51" y2="43.72" stroke="#222" stroke-width="0.9"/><line x1="49.83" y1="49.83" x2="52.66" y2="52.66" stroke="#222" stroke-width="0.9"/><path d="M46.6,32.7 L52.1,32.7 L49.6,36.9Z" fill="#e81010"/></svg>
<div class="t" style="left:389.1px;top:586.3px;transform:translate(-50%,-50%);font-size:7.2px;color:#222;font-weight:normal;">1</div>
<div class="t" style="left:399.2px;top:583.2px;transform:translate(-50%,-50%);font-size:7.2px;color:#222;font-weight:normal;">2</div>
<div class="t" style="left:413.7px;top:586.3px;transform:translate(-50%,-50%);font-size:7.2px;color:#222;font-weight:normal;">5</div>
<div class="t" style="left:379.1px;top:596.6px;transform:translate(-50%,-50%);font-size:7.2px;color:#222;font-weight:normal;">0,5</div>
<div class="t" style="left:423.0px;top:596.1px;transform:translate(-50%,-50%);font-size:7.2px;color:#222;font-weight:normal;">10</div>
<div class="t" style="left:378.5px;top:610.8px;transform:translate(-50%,-50%);font-size:7.2px;color:#222;font-weight:normal;">0,2</div>
<div class="t" style="left:424.3px;top:608.6px;transform:translate(-50%,-50%);font-size:7.2px;color:#222;font-weight:normal;">20</div>
<div class="t" style="left:382.6px;top:620.8px;transform:translate(-50%,-50%);font-size:7.2px;color:#222;font-weight:normal;">0,1</div>
<div class="t" style="left:420.2px;top:620.8px;transform:translate(-50%,-50%);font-size:7.2px;color:#222;font-weight:normal;">50</div>
<div class="t" style="left:401.4px;top:604.3px;transform:translate(-50%,-50%);font-size:8px;color:#444;font-weight:normal;">8</div>
<div class="a" style="left:442.2px;top:581.3px;width:20.1px;height:19.4px;border:1px solid #b8c8b8;border-radius:2px;background:#c8e0c8"></div>
<div class="a" style="left:444.0px;top:583.0px;width:16.5px;height:16.0px;border-radius:2px;background:linear-gradient(#50c050,#1a9a1a)"></div>
<svg class="a" style="left:446.5px;top:585px;" width="12" height="12" viewBox="0 0 12 12"><path d="M3.3,3 A4.3,4.3 0 1 0 8.7,3" fill="none" stroke="#fff" stroke-width="1.2"/><path d="M6,0.8 V5.5" stroke="#fff" stroke-width="1.2"/></svg>
<div class="a" style="left:442.2px;top:604.5px;width:20.1px;height:20.1px;border:1px solid #b0b0b0;border-radius:2px;background:linear-gradient(#f8f8f8,#e0e0e0)"></div>
<svg class="a" style="left:444.5px;top:607px;" width="16" height="15" viewBox="0 0 16 15"><path d="M1,1 L15,7.5 L1,14Z" fill="#f8d020" stroke="#222" stroke-width="1.2"/><text x="5.8" y="9.5" font-family="Liberation Sans" font-size="5" fill="#333" text-anchor="middle">×</text></svg>
<div class="a" style="left:465.4px;top:604.5px;width:20.1px;height:20.1px;border:1px solid #b0b0b0;border-radius:2px;background:linear-gradient(#f8f8f8,#e0e0e0)"></div>
<svg class="a" style="left:468.5px;top:606.5px;" width="14" height="16" viewBox="0 0 14 16"><rect x="0.5" y="0.5" width="13" height="15" rx="1" fill="#3a8ae8" stroke="#2a6ac0" stroke-width="0.8"/><rect x="2" y="2" width="10" height="3" fill="#b0e8a0"/><g fill="#e8f0ff"><rect x="2" y="6.5" width="2.3" height="1.8"/><rect x="5.3" y="6.5" width="2.3" height="1.8"/><rect x="8.6" y="6.5" width="2.3" height="1.8"/><rect x="2" y="9.5" width="2.3" height="1.8"/><rect x="5.3" y="9.5" width="2.3" height="1.8"/><rect x="8.6" y="9.5" width="2.3" height="1.8"/><rect x="2" y="12.5" width="2.3" height="1.8"/><rect x="5.3" y="12.5" width="2.3" height="1.8"/><rect x="8.6" y="12.5" width="2.3" height="1.8"/></g><rect x="2" y="6.5" width="2.3" height="1.8" fill="#e03030"/></svg>
<div class="a" style="left:363.5px;top:627.7px;width:124.8px;height:19.8px;border:1px solid #d0d0d0;background:#ececec"></div>
<div class="a" style="left:382.0px;top:628.0px;width:106.0px;height:19.0px;background:linear-gradient(#fafafa,#ececec);border-left:1px solid #d8d8d8"></div>
<svg class="a" style="left:366px;top:628px;" width="16" height="19" viewBox="0 0 16 19"><rect x="3.2" y="1.1" width="4.8" height="9.5" rx="1.2" fill="#2e2e2e"/><rect x="1.5" y="10" width="8" height="8" rx="0.8" fill="#262626"/><rect x="9" y="10.2" width="5.2" height="2.9" rx="1" fill="#2a2a2a"/></svg>
<div class="t" style="left:435.3px;top:638.2px;transform:translate(-50%,-50%);font-size:8.6px;color:#1a1a1a;font-weight:normal;">ДПКВ</div>
<svg class="a" style="left:483px;top:642px;" width="5" height="5" viewBox="0 0 5 5"><path d="M0,5 L5,0 L5,5Z" fill="#111"/></svg>
<div class="a" style="left:491.6px;top:553.2px;width:86.4px;height:93.9px;border:1px solid #d0d0d0;border-radius:3px"></div><div class="t" style="left:498.0px;top:551.2px;padding:0 2px;background:#f0f0f0;font-size:8.9px;font-weight:bold;color:#1f4f8f;-webkit-text-stroke:0.3px #1f4f8f">Развертка</div>
<svg class="a" style="left:492.4px;top:544.5px;" width="80" height="80" viewBox="0 0 80 80"><defs><radialGradient id="kg532" cx="0.45" cy="0.35" r="0.7"><stop offset="0" stop-color="#f4f4f4"/><stop offset="0.55" stop-color="#c8c8c8"/><stop offset="1" stop-color="#9a9a9a"/></radialGradient></defs><circle cx="40" cy="40" r="14.6" fill="url(#kg532)"/><circle cx="40" cy="40" r="9.6" fill="#f4f4f4"/><line x1="50.32" y1="50.32" x2="51.46" y2="51.46" stroke="#b0b0b0" stroke-width="0.8"/><line x1="52.64" y1="47.30" x2="54.03" y2="48.10" stroke="#b0b0b0" stroke-width="0.8"/><line x1="54.10" y1="43.78" x2="55.65" y2="44.19" stroke="#b0b0b0" stroke-width="0.8"/><line x1="54.60" y1="40.00" x2="56.20" y2="40.00" stroke="#b0b0b0" stroke-width="0.8"/><line x1="54.10" y1="36.22" x2="55.65" y2="35.81" stroke="#b0b0b0" stroke-width="0.8"/><line x1="52.64" y1="32.70" x2="54.03" y2="31.90" stroke="#b0b0b0" stroke-width="0.8"/><line x1="50.32" y1="29.68" x2="51.46" y2="28.54" stroke="#b0b0b0" stroke-width="0.8"/><line x1="47.30" y1="27.36" x2="48.10" y2="25.97" stroke="#b0b0b0" stroke-width="0.8"/><line x1="43.78" y1="25.90" x2="44.19" y2="24.35" stroke="#b0b0b0" stroke-width="0.8"/><line x1="40.00" y1="25.40" x2="40.00" y2="23.80" stroke="#b0b0b0" stroke-width="0.8"/><line x1="36.22" y1="25.90" x2="35.81" y2="24.35" stroke="#b0b0b0" stroke-width="0.8"/><line x1="32.70" y1="27.36" x2="31.90" y2="25.97" stroke="#b0b0b0" stroke-width="0.8"/><line x1="29.68" y1="29.68" x2="28.54" y2="28.54" stroke="#b0b0b0" stroke-width="0.8"/><line x1="27.36" y1="32.70" x2="25.97" y2="31.90" stroke="#b0b0b0" stroke-width="0.8"/><line x1="25.90" y1="36.22" x2="24.35" y2="35.81" stroke="#b0b0b0" stroke-width="0.8"/><line x1="25.40" y1="40.00" x2="23.80" y2="40.00" stroke="#b0b0b0" stroke-width="0.8"/><line x1="25.90" y1="43.78" x2="24.35" y2="44.19" stroke="#b0b0b0" stroke-width="0.8"/><line x1="27.36" y1="47.30" x2="25.97" y2="48.10" stroke="#b0b0b0" stroke-width="0.8"/><line x1="29.68" y1="50.32" x2="28.54" y2="51.46" stroke="#b0b0b0" stroke-width="0.8"/><line x1="29.68" y1="50.32" x2="26.71" y2="53.29" stroke="#222" stroke-width="0.9"/><line x1="26.77" y1="33.83" x2="22.96" y2="32.05" stroke="#222" stroke-width="0.9"/><line x1="40.00" y1="25.40" x2="40.00" y2="21.20" stroke="#222" stroke-width="0.9"/><line x1="53.23" y1="33.83" x2="57.04" y2="32.05" stroke="#222" stroke-width="0.9"/><line x1="50.32" y1="50.32" x2="52.80" y2="52.80" stroke="#c8c8c8" stroke-width="0.8"/><path d="M41.5,27.1 L47.0,27.1 L44.5,31.3Z" fill="#e81010"/></svg>
<div class="t" style="left:532.5px;top:563.0px;transform:translate(-50%,-50%);font-size:6.6px;color:#222;font-weight:normal;">100K</div>
<div class="t" style="left:509.5px;top:576.0px;transform:translate(-50%,-50%);font-size:6.6px;color:#222;font-weight:normal;">10K</div>
<div class="t" style="left:553.5px;top:576.0px;transform:translate(-50%,-50%);font-size:6.6px;color:#222;font-weight:normal;">1M</div>
<div class="t" style="left:532.5px;top:584.6px;transform:translate(-50%,-50%);font-size:6.6px;color:#222;font-weight:normal;">200K</div>
<div class="t" style="left:514.5px;top:601.0px;transform:translate(-50%,-50%);font-size:6.6px;color:#222;font-weight:normal;">1K</div>
<div class="t" style="left:551.0px;top:601.0px;transform:translate(-50%,-50%);font-size:6.6px;color:#b8b8b8;font-weight:normal;">6M</div>
<div class="a" style="left:581.6px;top:553.2px;width:64.0px;height:93.9px;border:1px solid #d0d0d0;border-radius:3px"></div><div class="t" style="left:587.0px;top:551.2px;padding:0 2px;background:#f0f0f0;font-size:8.9px;font-weight:bold;color:#8a1818;-webkit-text-stroke:0.3px #8a1818">Синхро</div>
<div class="a" style="left:584.8px;top:560.2px;width:57.6px;height:23.0px;border:1px solid #a8a8a8;border-radius:2px;background:linear-gradient(#f8f8f8,#e6e6e6)"></div>
<div class="t" style="left:613.6px;top:571.5px;transform:translate(-50%,-50%);font-size:8.5px;color:#4a4a4a;font-weight:bold;">Выключена</div>
<svg class="a" style="left:637.5px;top:578px;" width="4" height="4" viewBox="0 0 4 4"><path d="M0,4 L4,0 L4,4Z" fill="#111"/></svg>
<div class="a" style="left:585.2px;top:586.6px;width:26.3px;height:19.7px;border:1px solid #c8c8c8;border-radius:2px;background:#f0f0f0"></div>
<div class="a" style="left:615.4px;top:586.6px;width:27.0px;height:19.7px;border:1px solid #c8c8c8;border-radius:2px;background:#f0f0f0"></div>
<svg class="a" style="left:591px;top:590px;" width="15" height="12" viewBox="0 0 15 12"><path d="M1,9.5 H7.5 V2.5 H13" fill="none" stroke="#777" stroke-width="1"/><path d="M4,8.5 L7.5,4.5 L11,8.5Z" fill="#8a5a5a"/></svg>
<svg class="a" style="left:621px;top:590px;" width="15" height="12" viewBox="0 0 15 12"><path d="M1,2.5 H7.5 V9.5 H13" fill="none" stroke="#777" stroke-width="1"/><path d="M4,3.5 L7.5,7.5 L11,3.5Z" fill="#5a5a8a"/></svg>
<div class="a" style="left:649.4px;top:553.4px;width:144.0px;height:32.0px;border:1px solid #d0d0d0;border-radius:3px"></div><div class="t" style="left:655.5px;top:551.4px;padding:0 2px;background:#f0f0f0;font-size:8.6px;font-weight:bold;color:#2060a8;-webkit-text-stroke:0.3px #2060a8">Положение маркеров</div>
<svg class="a" style="left:785.5px;top:556px;" width="5" height="5" viewBox="0 0 5 5"><path d="M0,0 L5,0 L5,5Z" fill="#111"/></svg>
<div class="t" style="left:653.7px;top:562.8px;font-size:7.9px;color:#8a1a9a">T1= 30,213 с</div>
<div class="t" style="left:728.5px;top:562.8px;font-size:7.9px;color:#9a2020">∆T= 0,2 с</div>
<div class="t" style="left:653.7px;top:573.9px;font-size:7.9px;color:#2a8a2a">T2= 30,413 с</div>
<div class="t" style="left:732.5px;top:573.9px;font-size:7.9px;color:#1a1a9a">F= 5 Гц</div>
<div class="a" style="left:649.4px;top:591.0px;width:144.0px;height:56.1px;border:1px solid #d0d0d0;border-radius:3px"></div><div class="t" style="left:655.5px;top:589.0px;padding:0 2px;background:#f0f0f0;font-size:8.6px;font-weight:bold;color:#1e8a1e;-webkit-text-stroke:0.3px #1e8a1e">Управление</div>
<div class="a" style="left:653.4px;top:598.3px;width:43.2px;height:21.9px;border:1px solid #b0b0b0;border-radius:2px;background:linear-gradient(#f6f6f6,#e6e6e6)"></div>
<div class="a" style="left:700.0px;top:598.3px;width:42.5px;height:21.9px;border:1px solid #b0b0b0;border-radius:2px;background:linear-gradient(#f6f6f6,#e6e6e6)"></div>
<div class="a" style="left:746.3px;top:598.3px;width:42.9px;height:21.9px;border:1px solid #b0b0b0;border-radius:2px;background:linear-gradient(#f6f6f6,#e6e6e6)"></div>
<div class="a" style="left:663.0px;top:601.5px;width:24.5px;height:15.5px;background:#d8e8f0"></div>
<svg class="a" style="left:663px;top:601.5px;" width="25" height="16" viewBox="0 0 25 16"><path d="M0.8,8 Q6,-4 12.5,8 Q19,20 24.2,8" fill="none" stroke="#e82020" stroke-width="1.2"/></svg>
<div class="a" style="left:702.5px;top:601.0px;width:37.5px;height:17.0px;border:1px dashed #4a5a8a;background:#e8ecf0"></div>
<svg class="a" style="left:708px;top:601.5px;" width="27" height="16" viewBox="0 0 27 16"><path d="M1,8 Q7,-4 13.5,8 Q20,20 26,8" fill="none" stroke="#e82020" stroke-width="1.2"/></svg>
<div class="a" style="left:748.5px;top:600.5px;width:38.5px;height:17.5px;border:1px solid #8a8aa8;background:#f8f8ff"></div>
<svg class="a" style="left:750px;top:601.5px;" width="36" height="16" viewBox="0 0 36 16"><path d="M2,5 L5,3 L7,6 L9,3 L11,6 L13,3 L15,6 L17,3 L19,6 L21,4 L24,5 H31" fill="none" stroke="#e82020" stroke-width="1"/><rect x="27" y="3.5" width="5" height="3" fill="#e82020"/><path d="M2,12 L5,10 L7,13 L9,10 L11,13 L13,10 L15,13 L17,10 L19,13 L21,11 L24,12 H31" fill="none" stroke="#2a2ae8" stroke-width="1"/><rect x="27" y="10.5" width="5" height="3" fill="#2a2ae8"/><rect x="31" y="0.5" width="4.5" height="15" fill="#d8d8d8"/></svg>
<div class="a" style="left:653.4px;top:624.0px;width:66.3px;height:19.7px;border:1px solid #a0a0a0;border-radius:2px;background:linear-gradient(#f8f8f8,#e8e8e8)"></div>
<svg class="a" style="left:673px;top:630px;" width="6" height="9" viewBox="0 0 6 9"><path d="M0.5,0.5 L5.5,4.5 L0.5,8.5Z" fill="#1e8a1e"/></svg>
<div class="t" style="left:681.5px;top:629.5px;font-size:8.6px;font-weight:bold;color:#1e7a1e;-webkit-text-stroke:0.3px #1e7a1e">Пуск</div>
<div class="t" style="left:727.2px;top:629.5px;font-size:8.3px;color:#2e8a3e;-webkit-text-stroke:0.15px #2e8a3e">[ 00:00:30:563 ]</div>
<div class="a" style="left:0.0px;top:650.6px;width:1156.0px;height:49.4px;background:#f0f0f0"></div>
<div class="a" style="left:1.0px;top:651.0px;width:1155.0px;height:9.0px;border:1px solid #c8c8c8;border-right-color:#a8a8a8;background:#f0f0f0"></div>
<div class="t" style="left:3px;top:653.3px;font-size:8.1px;color:#222">X = 30,226; Y1 = -2,771</div>
<div class="a" style="left:0.0px;top:658.0px;width:1156.0px;height:42.0px;background:#fff"></div>
</body></html>
